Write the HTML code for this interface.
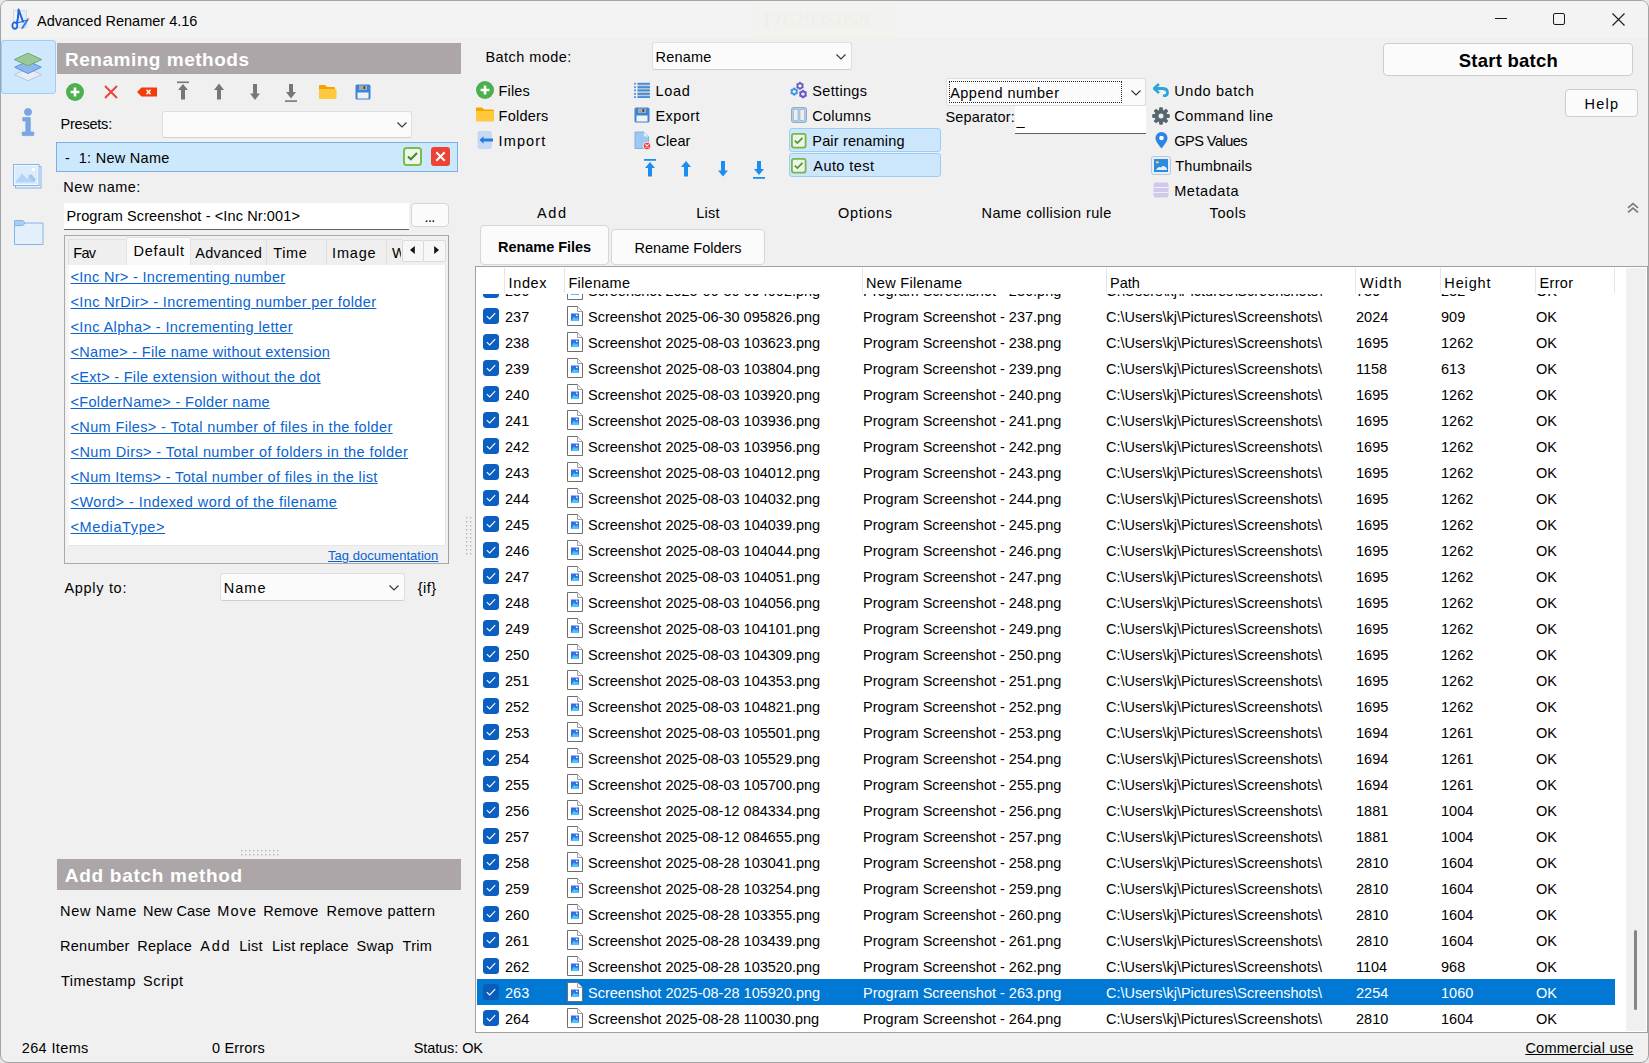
<!DOCTYPE html><html><head><meta charset="utf-8"><style>
html,body{margin:0;padding:0;}
body{width:1649px;height:1063px;overflow:hidden;background:#e6e6e6;position:relative;font-family:"Liberation Sans",sans-serif;}
.a{position:absolute;}
.t{position:absolute;white-space:pre;line-height:1;font-family:"Liberation Sans",sans-serif;}
.u{text-decoration:underline;text-underline-offset:1px;}
svg{display:block;}
</style></head><body>
<div class="a" style="left:0px;top:0px;width:1647px;height:1061px;background:#f0f0f0;border:1px solid #a4a4a4;border-radius:8px;overflow:hidden"></div>
<div class="a" style="left:1px;top:1px;width:1647px;height:37px;background:#f3f3f3;border-radius:7px 7px 0 0"></div>
<svg class="a" style="left:11px;top:8px" width="19" height="22" viewBox="0 0 19 22">
<rect x="2.5" y="2.5" width="13" height="17" fill="#e4ecf5" stroke="#d2d9e2" stroke-width="1"/>
<rect x="3.5" y="3.5" width="4" height="15" fill="#f2f6fb"/>
<ellipse cx="3.8" cy="17.6" rx="2.5" ry="3.3" fill="none" stroke="#1f66dc" stroke-width="1.7"/>
<path d="M5.6 15.5 C7.2 12 7.2 6 7.6 1.5 L12.3 14.5" fill="none" stroke="#1f66dc" stroke-width="2" stroke-linejoin="round"/>
<path d="M4.5 15.8 C8 14 12 13.5 15.5 12.2" fill="none" stroke="#1f66dc" stroke-width="1.2"/>
<path d="M11 20.5 L17 11.2" fill="none" stroke="#2a86e8" stroke-width="2"/>
<circle cx="17.4" cy="10.6" r="0.9" fill="#f07a6a"/>
<circle cx="11" cy="20.6" r="0.7" fill="#d08a20"/>
</svg>
<div class="t " style="left:37px;top:14px;font-size:14.5px;font-weight:normal;color:#000;">Advanced Renamer 4.16</div>
<div class="a" style="left:751px;top:2px;width:147px;height:36px;background:#f2f2ee"></div>
<div class="t" style="left:761px;top:10px;font-family:'Liberation Serif',serif;font-size:21.5px;color:#eeeeea;letter-spacing:0.1px">1762935058</div>
<svg class="a" style="left:1495px;top:18px" width="12" height="1" viewBox="0 0 12 1"><rect x="0" y="0" width="12" height="1" fill="#1a1a1a"/></svg>
<svg class="a" style="left:1553px;top:13px" width="12" height="12" viewBox="0 0 12 12"><rect x="0.5" y="0.5" width="11" height="11" rx="1.5" fill="none" stroke="#1a1a1a" stroke-width="1"/></svg>
<svg class="a" style="left:1612px;top:13px" width="13" height="13" viewBox="0 0 13 13"><path d="M0.5 0.5L12.5 12.5M12.5 0.5L0.5 12.5" stroke="#1a1a1a" stroke-width="1.1"/></svg>
<div class="a" style="left:1px;top:40px;width:55px;height:54px;background:#d0e8fd;border:1.5px solid #99cffb;border-radius:3px;box-sizing:border-box"></div>
<svg class="a" style="left:13px;top:52px" width="30" height="30" viewBox="0 0 30 30">
<path d="M15 16.4 L28.5 22.6 L15 28.8 L1.5 22.6Z" fill="#e6edf5" stroke="#b9bfd6" stroke-width="0.9"/>
<path d="M15 8.9 L28.2 15.2 L15 21.5 L1.8 15.2Z" fill="#8cb8ef" stroke="#5b8fd6" stroke-width="1"/>
<path d="M15 1.2 L28.8 7.5 L15 13.8 L1.2 7.5Z" fill="#9ac89a" stroke="#6eaa6e" stroke-width="1"/>
</svg>
<svg class="a" style="left:21px;top:108px" width="14" height="29" viewBox="0 0 14 29">
<circle cx="7" cy="4" r="3.6" fill="#79a7e6" stroke="#6a98dc" stroke-width="0.6"/>
<path d="M1.8 9.5 H9.3 V24 H12.8 V27.6 H1.2 V24 H4.8 V13 H1.8Z" fill="#79a7e6" stroke="#6a98dc" stroke-width="0.6"/>
</svg>
<svg class="a" style="left:13px;top:164px" width="30" height="26" viewBox="0 0 30 26">
<rect x="2.5" y="2.5" width="25.5" height="21.5" fill="#e8f2fd" stroke="#86b4e8" stroke-width="1"/>
<rect x="0.5" y="0.5" width="25.5" height="21" fill="#f4f9ff" stroke="#86b4e8" stroke-width="1"/>
<rect x="2" y="2" width="22.5" height="18" fill="#ddecfb"/>
<path d="M2 18.5 L9 9.5 L14 15 L16.5 12.5 L22 18.5Z" fill="#b2d5f7"/>
<path d="M15 12 L18 10 L23 15.5 L21 18Z" fill="#a2c8f2"/>
<circle cx="20.5" cy="5.5" r="1.7" fill="#fff"/>
</svg>
<svg class="a" style="left:14px;top:220px" width="30" height="26" viewBox="0 0 30 26">
<path d="M0.5 3 H29 V24.5 H0.5Z" fill="#e3f0fc" stroke="#86b4e8" stroke-width="1"/>
<path d="M0.5 1 Q0.5 0.5 1 0.5 H9 L11 3 L9 5.5 H0.5Z" fill="#a9cdf3" stroke="#86b4e8" stroke-width="1"/>
</svg>
<div class="a" style="left:57px;top:43px;width:404px;height:31px;background:#aca6a8"></div>
<div class="t " style="left:65px;top:50px;font-size:19px;font-weight:bold;color:#ffffff;letter-spacing:0.513px;">Renaming methods</div>
<svg class="a" style="left:66px;top:83px" width="18" height="18" viewBox="0 0 18 18"><circle cx="9" cy="9" r="9" fill="#4caf50"/><path d="M9 4.6v8.8M4.6 9h8.8" stroke="#fff" stroke-width="2.6"/></svg>
<svg class="a" style="left:104px;top:85px" width="14" height="14" viewBox="0 0 14 14"><path d="M1 1L13 13M13 1L1 13" stroke="#e9463c" stroke-width="2"/></svg>
<svg class="a" style="left:137px;top:87px" width="20" height="10" viewBox="0 0 20 10"><path d="M0 5 L4.5 0.5 H20 V9.5 H4.5Z" fill="#f23d0a"/><path d="M9.5 2.7L13.5 7.3M13.5 2.7L9.5 7.3" stroke="#fff" stroke-width="1.4"/></svg>
<svg class="a" style="left:177px;top:81px" width="13" height="19" viewBox="0 0 13 19"><rect x="0" y="0.5" width="12" height="1.6" fill="#777777"/><path d="M6 3 L11 9 H8 V18.5 H4 V9 H1Z" fill="#777777"/></svg>
<svg class="a" style="left:213px;top:83px" width="12" height="17" viewBox="0 0 12 17"><path d="M6 0.5 L11 7 H8 V16.5 H4 V7 H1Z" fill="#777777"/></svg>
<svg class="a" style="left:249px;top:84px" width="12" height="17" viewBox="0 0 12 17"><path d="M6 16 L11 9.5 H8 V0 H4 V9.5 H1Z" fill="#777777"/></svg>
<svg class="a" style="left:285px;top:84px" width="12" height="18" viewBox="0 0 12 18"><path d="M6 14.5 L11 8 H8 V0 H4 V8 H1Z" fill="#777777"/><rect x="0" y="16.3" width="12" height="1.6" fill="#777777"/></svg>
<svg class="a" style="left:318px;top:84px" width="19" height="16" viewBox="0 0 19 16"><path d="M1 2 Q1 1 2 1 H7 L9 3 H16 Q17 3 17 4 V6 H1Z" fill="#f5a300"/><path d="M1 5 H17.5 Q18.5 5 18.5 6 V14 Q18.5 15 17.5 15 H2 Q1 15 1 14Z" fill="#ffc83d"/></svg>
<svg class="a" style="left:355px;top:84px" width="16" height="16" viewBox="0 0 16 16"><rect x="0.5" y="0.5" width="15" height="15" rx="1.5" fill="#3a86d8"/><rect x="4" y="1.5" width="8" height="4.5" fill="#a8a8a8"/><rect x="8.5" y="2" width="1.6" height="3" fill="#444"/><rect x="2.5" y="8.5" width="11" height="6" fill="#f3f3f3"/></svg>
<div class="t " style="left:60.5px;top:117px;font-size:14.5px;font-weight:normal;color:#000;letter-spacing:-0.214px;">Presets:</div>
<div class="a" style="left:162px;top:111px;width:250px;height:27px;background:#fbfbfb;border:1px solid #dedede;border-bottom-color:#cfcfcf;border-radius:3px;box-sizing:border-box"></div>
<svg class="a" style="left:397px;top:122px" width="10" height="6" viewBox="0 0 10 6"><path d="M0.5 0.5 L5 5 L9.5 0.5" fill="none" stroke="#333" stroke-width="1.1"/></svg>
<div class="a" style="left:56px;top:142px;width:402px;height:30px;background:#cce8fc;border:1px solid #7aaeea;box-sizing:border-box"></div>
<div class="t " style="left:65px;top:151px;font-size:14.5px;font-weight:normal;color:#000;letter-spacing:0.277px;">-  1: New Name</div>
<svg class="a" style="left:403px;top:147px" width="19" height="19" viewBox="0 0 19 19"><rect x="1" y="1" width="17" height="17" rx="2.5" fill="#eef6ea" stroke="#7dbd47" stroke-width="2"/><path d="M5 9.5 L7.8 12.3 L14 6" fill="none" stroke="#3f8a2a" stroke-width="2"/></svg>
<svg class="a" style="left:431px;top:147px" width="19" height="19" viewBox="0 0 19 19"><rect x="0" y="0" width="19" height="19" rx="3" fill="#ee4334"/><path d="M5.3 5.3L13.7 13.7M13.7 5.3L5.3 13.7" stroke="#fff" stroke-width="2"/></svg>
<div class="t " style="left:63.3px;top:180px;font-size:14.5px;font-weight:normal;color:#000;letter-spacing:0.450px;">New name:</div>
<div class="a" style="left:64px;top:203px;width:345px;height:27px;background:#ffffff;border-bottom:1px solid #5e5e5e;box-sizing:border-box"></div>
<div class="t " style="left:66.4px;top:209px;font-size:14.5px;font-weight:normal;color:#000;letter-spacing:0.119px;">Program Screenshot - &lt;Inc Nr:001&gt;</div>
<div class="a" style="left:411px;top:203px;width:38px;height:24px;background:#fbfbfb;border:1px solid #d6d6d6;border-radius:4px;box-sizing:border-box"></div>
<div class="t " style="left:424.6px;top:210px;font-size:14.5px;font-weight:normal;color:#000;letter-spacing:-0.700px;">...</div>
<div class="a" style="left:64px;top:235px;width:385px;height:329px;border:1px solid #a9a9a9;border-right-color:#a0a0a0;box-sizing:border-box;background:#f0f0f0"></div>
<div class="a" style="left:68px;top:239px;width:59px;height:26px;background:#efefef;border:1px solid #e0e0e0;border-bottom:none;box-sizing:border-box"></div>
<div class="a" style="left:190px;top:239px;width:77px;height:26px;background:#efefef;border:1px solid #e0e0e0;border-bottom:none;box-sizing:border-box"></div>
<div class="a" style="left:266px;top:239px;width:61px;height:26px;background:#efefef;border:1px solid #e0e0e0;border-bottom:none;box-sizing:border-box"></div>
<div class="a" style="left:326px;top:239px;width:61px;height:26px;background:#efefef;border:1px solid #e0e0e0;border-bottom:none;box-sizing:border-box"></div>
<div class="a" style="left:386px;top:239px;width:16px;height:26px;background:#efefef;border:1px solid #e0e0e0;border-bottom:none;border-right:none;box-sizing:border-box"></div>
<div class="a" style="left:126px;top:237px;width:65px;height:29px;background:#f9f9f9;border:1px solid #e3e3e3;border-bottom:none;box-sizing:border-box"></div>
<div class="t " style="left:73.3px;top:246px;font-size:14.5px;font-weight:normal;color:#000;letter-spacing:-0.700px;">Fav</div>
<div class="t " style="left:133.5px;top:244px;font-size:14.5px;font-weight:normal;color:#000;letter-spacing:0.783px;">Default</div>
<div class="t " style="left:195.3px;top:246px;font-size:14.5px;font-weight:normal;color:#000;letter-spacing:0.286px;">Advanced</div>
<div class="t " style="left:273.3px;top:246px;font-size:14.5px;font-weight:normal;color:#000;letter-spacing:0.633px;">Time</div>
<div class="t " style="left:332.1px;top:246px;font-size:14.5px;font-weight:normal;color:#000;letter-spacing:0.800px;">Image</div>
<div class="a" style="left:386px;top:239px;width:15px;height:26px;overflow:hidden"><div class="t" style="left:6px;top:7px;font-size:14.5px">W</div></div>
<div class="a" style="left:402px;top:240px;width:22px;height:22px;background:#f7f7f7;border:1px solid #dadada;border-radius:2px;box-sizing:border-box"></div>
<div class="a" style="left:423px;top:240px;width:23px;height:22px;background:#f7f7f7;border:1px solid #dadada;border-radius:2px;box-sizing:border-box"></div>
<svg class="a" style="left:410px;top:246px" width="5" height="8" viewBox="0 0 5 8"><path d="M4.8 0 V8 L0 4Z" fill="#111"/></svg>
<svg class="a" style="left:434px;top:246px" width="5" height="8" viewBox="0 0 5 8"><path d="M0.2 0 V8 L5 4Z" fill="#111"/></svg>
<div class="a" style="left:66px;top:265px;width:4px;height:281px;background:#f6f6f6"></div>
<div class="a" style="left:69px;top:265px;width:377px;height:281px;background:#ffffff;border-right:1px solid #e6e6e6;border-bottom:1px solid #e6e6e6;box-sizing:border-box"></div>
<div class="t u" style="left:70.5px;top:270px;font-size:14.5px;font-weight:normal;color:#0a64d0;letter-spacing:0.314px;">&lt;Inc Nr&gt; - Incrementing number</div>
<div class="t u" style="left:70.5px;top:295px;font-size:14.5px;font-weight:normal;color:#0a64d0;letter-spacing:0.377px;">&lt;Inc NrDir&gt; - Incrementing number per folder</div>
<div class="t u" style="left:70.5px;top:320px;font-size:14.5px;font-weight:normal;color:#0a64d0;letter-spacing:0.391px;">&lt;Inc Alpha&gt; - Incrementing letter</div>
<div class="t u" style="left:70.5px;top:345px;font-size:14.5px;font-weight:normal;color:#0a64d0;letter-spacing:0.317px;">&lt;Name&gt; - File name without extension</div>
<div class="t u" style="left:70.5px;top:370px;font-size:14.5px;font-weight:normal;color:#0a64d0;letter-spacing:0.305px;">&lt;Ext&gt; - File extension without the dot</div>
<div class="t u" style="left:70.5px;top:395px;font-size:14.5px;font-weight:normal;color:#0a64d0;letter-spacing:0.324px;">&lt;FolderName&gt; - Folder name</div>
<div class="t u" style="left:70.5px;top:420px;font-size:14.5px;font-weight:normal;color:#0a64d0;letter-spacing:0.362px;">&lt;Num Files&gt; - Total number of files in the folder</div>
<div class="t u" style="left:70.5px;top:445px;font-size:14.5px;font-weight:normal;color:#0a64d0;letter-spacing:0.408px;">&lt;Num Dirs&gt; - Total number of folders in the folder</div>
<div class="t u" style="left:70.5px;top:470px;font-size:14.5px;font-weight:normal;color:#0a64d0;letter-spacing:0.352px;">&lt;Num Items&gt; - Total number of files in the list</div>
<div class="t u" style="left:70.5px;top:495px;font-size:14.5px;font-weight:normal;color:#0a64d0;letter-spacing:0.442px;">&lt;Word&gt; - Indexed word of the filename</div>
<div class="t u" style="left:70.5px;top:520px;font-size:14.5px;font-weight:normal;color:#0a64d0;letter-spacing:0.610px;">&lt;MediaType&gt;</div>
<div class="t u" style="left:328px;top:549px;font-size:13px;font-weight:normal;color:#0a64d0;letter-spacing:0.031px;">Tag documentation</div>
<div class="t " style="left:64.4px;top:581px;font-size:14.5px;font-weight:normal;color:#000;letter-spacing:0.700px;">Apply to:</div>
<div class="a" style="left:220px;top:573px;width:185px;height:28px;background:#fbfbfb;border:1px solid #dedede;border-bottom-color:#cfcfcf;border-radius:3px;box-sizing:border-box"></div>
<div class="t " style="left:223.8px;top:581px;font-size:14.5px;font-weight:normal;color:#000;letter-spacing:1.000px;">Name</div>
<svg class="a" style="left:389px;top:585px" width="10" height="6" viewBox="0 0 10 6"><path d="M0.5 0.5 L5 5 L9.5 0.5" fill="none" stroke="#333" stroke-width="1.1"/></svg>
<div class="t " style="left:417.8px;top:581px;font-size:14.5px;font-weight:normal;color:#000;letter-spacing:0.467px;">{if}</div>
<svg class="a" style="left:465px;top:516px" width="8" height="39" viewBox="0 0 8 39"><rect x="1" y="1" width="1.4" height="1.4" fill="#b8b8b8"/><rect x="1" y="5" width="1.4" height="1.4" fill="#b8b8b8"/><rect x="1" y="9" width="1.4" height="1.4" fill="#b8b8b8"/><rect x="1" y="13" width="1.4" height="1.4" fill="#b8b8b8"/><rect x="1" y="17" width="1.4" height="1.4" fill="#b8b8b8"/><rect x="1" y="21" width="1.4" height="1.4" fill="#b8b8b8"/><rect x="1" y="25" width="1.4" height="1.4" fill="#b8b8b8"/><rect x="1" y="29" width="1.4" height="1.4" fill="#b8b8b8"/><rect x="1" y="33" width="1.4" height="1.4" fill="#b8b8b8"/><rect x="1" y="37" width="1.4" height="1.4" fill="#b8b8b8"/><rect x="5" y="1" width="1.4" height="1.4" fill="#b8b8b8"/><rect x="5" y="5" width="1.4" height="1.4" fill="#b8b8b8"/><rect x="5" y="9" width="1.4" height="1.4" fill="#b8b8b8"/><rect x="5" y="13" width="1.4" height="1.4" fill="#b8b8b8"/><rect x="5" y="17" width="1.4" height="1.4" fill="#b8b8b8"/><rect x="5" y="21" width="1.4" height="1.4" fill="#b8b8b8"/><rect x="5" y="25" width="1.4" height="1.4" fill="#b8b8b8"/><rect x="5" y="29" width="1.4" height="1.4" fill="#b8b8b8"/><rect x="5" y="33" width="1.4" height="1.4" fill="#b8b8b8"/><rect x="5" y="37" width="1.4" height="1.4" fill="#b8b8b8"/></svg>
<svg class="a" style="left:240px;top:849px" width="39" height="8" viewBox="0 0 39 8"><rect x="1" y="1" width="1.4" height="1.4" fill="#b8b8b8"/><rect x="1" y="5" width="1.4" height="1.4" fill="#b8b8b8"/><rect x="5" y="1" width="1.4" height="1.4" fill="#b8b8b8"/><rect x="5" y="5" width="1.4" height="1.4" fill="#b8b8b8"/><rect x="9" y="1" width="1.4" height="1.4" fill="#b8b8b8"/><rect x="9" y="5" width="1.4" height="1.4" fill="#b8b8b8"/><rect x="13" y="1" width="1.4" height="1.4" fill="#b8b8b8"/><rect x="13" y="5" width="1.4" height="1.4" fill="#b8b8b8"/><rect x="17" y="1" width="1.4" height="1.4" fill="#b8b8b8"/><rect x="17" y="5" width="1.4" height="1.4" fill="#b8b8b8"/><rect x="21" y="1" width="1.4" height="1.4" fill="#b8b8b8"/><rect x="21" y="5" width="1.4" height="1.4" fill="#b8b8b8"/><rect x="25" y="1" width="1.4" height="1.4" fill="#b8b8b8"/><rect x="25" y="5" width="1.4" height="1.4" fill="#b8b8b8"/><rect x="29" y="1" width="1.4" height="1.4" fill="#b8b8b8"/><rect x="29" y="5" width="1.4" height="1.4" fill="#b8b8b8"/><rect x="33" y="1" width="1.4" height="1.4" fill="#b8b8b8"/><rect x="33" y="5" width="1.4" height="1.4" fill="#b8b8b8"/><rect x="37" y="1" width="1.4" height="1.4" fill="#b8b8b8"/><rect x="37" y="5" width="1.4" height="1.4" fill="#b8b8b8"/></svg>
<div class="a" style="left:57px;top:859px;width:404px;height:31px;background:#aca6a8"></div>
<div class="t " style="left:64.8px;top:866px;font-size:19px;font-weight:bold;color:#ffffff;letter-spacing:0.707px;">Add batch method</div>
<div class="t " style="left:60.1px;top:904px;font-size:14.5px;font-weight:normal;color:#000;letter-spacing:0.629px;">New Name</div>
<div class="t " style="left:143.1px;top:904px;font-size:14.5px;font-weight:normal;color:#000;letter-spacing:0.086px;">New Case</div>
<div class="t " style="left:217.3px;top:904px;font-size:14.5px;font-weight:normal;color:#000;letter-spacing:1.133px;">Move</div>
<div class="t " style="left:263.3px;top:904px;font-size:14.5px;font-weight:normal;color:#000;letter-spacing:0.200px;">Remove</div>
<div class="t " style="left:326.5px;top:904px;font-size:14.5px;font-weight:normal;color:#000;letter-spacing:0.415px;">Remove pattern</div>
<div class="t " style="left:60.1px;top:939px;font-size:14.5px;font-weight:normal;color:#000;letter-spacing:0.229px;">Renumber</div>
<div class="t " style="left:137.3px;top:939px;font-size:14.5px;font-weight:normal;color:#000;letter-spacing:0.233px;">Replace</div>
<div class="t " style="left:200.3px;top:939px;font-size:14.5px;font-weight:normal;color:#000;letter-spacing:1.700px;">Add</div>
<div class="t " style="left:239.2px;top:939px;font-size:14.5px;font-weight:normal;color:#000;letter-spacing:0.267px;">List</div>
<div class="t " style="left:272.1px;top:939px;font-size:14.5px;font-weight:normal;color:#000;letter-spacing:0.200px;">List replace</div>
<div class="t " style="left:356.5px;top:939px;font-size:14.5px;font-weight:normal;color:#000;letter-spacing:0.300px;">Swap</div>
<div class="t " style="left:402.6px;top:939px;font-size:14.5px;font-weight:normal;color:#000;letter-spacing:0.233px;">Trim</div>
<div class="t " style="left:61.1px;top:974px;font-size:14.5px;font-weight:normal;color:#000;letter-spacing:0.425px;">Timestamp</div>
<div class="t " style="left:143.1px;top:974px;font-size:14.5px;font-weight:normal;color:#000;letter-spacing:0.580px;">Script</div>
<div class="t " style="left:21.7px;top:1041px;font-size:14.5px;font-weight:normal;color:#000;letter-spacing:0.375px;">264 Items</div>
<div class="t " style="left:211.9px;top:1041px;font-size:14.5px;font-weight:normal;color:#000;letter-spacing:0.200px;">0 Errors</div>
<div class="t " style="left:413.7px;top:1041px;font-size:14.5px;font-weight:normal;color:#000;letter-spacing:-0.089px;">Status: OK</div>
<div class="t u" style="left:1525.4px;top:1041px;font-size:14.5px;font-weight:normal;color:#000;letter-spacing:0.238px;">Commercial use</div>
<div class="t " style="left:485.5px;top:50px;font-size:14.5px;font-weight:normal;color:#000;letter-spacing:0.440px;">Batch mode:</div>
<div class="a" style="left:652px;top:42px;width:200px;height:28px;background:#fbfbfb;border:1px solid #dedede;border-bottom-color:#cfcfcf;border-radius:3px;box-sizing:border-box"></div>
<div class="t " style="left:655.5px;top:50px;font-size:14.5px;font-weight:normal;color:#000;letter-spacing:0.220px;">Rename</div>
<svg class="a" style="left:836px;top:54px" width="10" height="6" viewBox="0 0 10 6"><path d="M0.5 0.5 L5 5 L9.5 0.5" fill="none" stroke="#333" stroke-width="1.1"/></svg>
<svg class="a" style="left:476px;top:81px" width="18" height="18" viewBox="0 0 18 18"><circle cx="9" cy="9" r="9" fill="#4caf50"/><path d="M9 4.6v8.8M4.6 9h8.8" stroke="#fff" stroke-width="2.6"/></svg>
<div class="t " style="left:498.6px;top:84px;font-size:14.5px;font-weight:normal;color:#000;letter-spacing:0.125px;">Files</div>
<svg class="a" style="left:476px;top:107px" width="18" height="15" viewBox="0 0 18 15"><path d="M0 1.5 Q0 0.5 1 0.5 H6 L8 2.5 H17 Q18 2.5 18 3.5 V5 H0Z" fill="#f5a300"/><path d="M0 4 H17 Q18 4 18 5 V13.5 Q18 14.5 17 14.5 H1 Q0 14.5 0 13.5Z" fill="#ffc83d"/></svg>
<div class="t " style="left:498.6px;top:109px;font-size:14.5px;font-weight:normal;color:#000;letter-spacing:0.233px;">Folders</div>
<svg class="a" style="left:477px;top:131px" width="17" height="18" viewBox="0 0 17 18"><rect x="1" y="0.5" width="13.5" height="17" rx="1.5" fill="#c4dbf6" stroke="#a9c4e6" stroke-width="0.8" stroke-dasharray="1 1"/><path d="M2.5 9 L6.5 5.2 V7.6 H16 V10.4 H6.5 V12.8Z" fill="#2a78e0"/></svg>
<div class="t " style="left:498.6px;top:134px;font-size:14.5px;font-weight:normal;color:#000;letter-spacing:1.100px;">Import</div>
<svg class="a" style="left:634px;top:82px" width="16" height="16" viewBox="0 0 16 16"><rect x="3.5" y="1" width="12" height="14" fill="#c4c8cc"/><rect x="0" y="0.8" width="2" height="1.8" fill="#5a9ae0"/><rect x="3.5" y="0.8" width="12.5" height="1.8" fill="#3a8ee0"/><rect x="0" y="4.3" width="2" height="1.8" fill="#5a9ae0"/><rect x="3.5" y="4.3" width="12.5" height="1.8" fill="#3a8ee0"/><rect x="0" y="7.5" width="2" height="1.8" fill="#5a9ae0"/><rect x="3.5" y="7.5" width="12.5" height="1.8" fill="#3a8ee0"/><rect x="0" y="11" width="2" height="1.8" fill="#5a9ae0"/><rect x="3.5" y="11" width="12.5" height="1.8" fill="#3a8ee0"/><rect x="0" y="14.2" width="2" height="1.8" fill="#5a9ae0"/><rect x="3.5" y="14.2" width="12.5" height="1.8" fill="#3a8ee0"/></svg>
<div class="t " style="left:655.5px;top:84px;font-size:14.5px;font-weight:normal;color:#000;letter-spacing:0.667px;">Load</div>
<svg class="a" style="left:634px;top:107px" width="16" height="16" viewBox="0 0 16 16"><rect x="0.5" y="0.5" width="15" height="15" rx="1.5" fill="#3a86d8"/><rect x="4" y="1.5" width="8" height="4.5" fill="#a8a8a8"/><rect x="8.5" y="2" width="1.6" height="3" fill="#444"/><rect x="2.5" y="8.5" width="11" height="6" fill="#f3f3f3"/></svg>
<div class="t " style="left:655.5px;top:109px;font-size:14.5px;font-weight:normal;color:#000;letter-spacing:0.440px;">Export</div>
<svg class="a" style="left:634px;top:131px" width="18" height="19" viewBox="0 0 18 19"><path d="M1 1 H10 L14.5 5.5 V17.5 H1Z" fill="#9cc8f2" stroke="#7fb2e6" stroke-width="1"/><path d="M10 1 V5.5 H14.5" fill="#e3f0fc"/><circle cx="13" cy="15" r="3.8" fill="#ea3b3b" stroke="#fff" stroke-width="0.8"/><path d="M11.4 13.4L14.6 16.6M14.6 13.4L11.4 16.6" stroke="#fff" stroke-width="1.1"/></svg>
<div class="t " style="left:655.5px;top:134px;font-size:14.5px;font-weight:normal;color:#000;letter-spacing:0.075px;">Clear</div>
<svg class="a" style="left:644px;top:159px" width="12" height="18" viewBox="0 0 12 18"><rect x="0" y="0" width="12" height="1.8" fill="#1a8ff0"/><path d="M6 3 L11 9 H8 V17.5 H4 V9 H1Z" fill="#1a8ff0"/></svg>
<svg class="a" style="left:680px;top:161px" width="12" height="16" viewBox="0 0 12 16"><path d="M6 0 L11 6 H8 V15.5 H4 V6 H1Z" fill="#1a8ff0"/></svg>
<svg class="a" style="left:717px;top:161px" width="12" height="16" viewBox="0 0 12 16"><path d="M6 15.5 L11 9.5 H8 V0 H4 V9.5 H1Z" fill="#1a8ff0"/></svg>
<svg class="a" style="left:753px;top:161px" width="12" height="18" viewBox="0 0 12 18"><path d="M6 14 L11 8 H8 V0 H4 V8 H1Z" fill="#1a8ff0"/><rect x="0" y="16" width="12" height="1.8" fill="#1a8ff0"/></svg>
<svg class="a" style="left:789px;top:81px" width="20" height="19" viewBox="0 0 20 19"><polygon points="11.00,0.50 12.68,1.90 14.72,2.65 14.35,4.80 14.72,6.95 12.68,7.70 11.00,9.10 9.32,7.70 7.28,6.95 7.65,4.80 7.28,2.65 9.32,1.90" fill="#6a58c6"/><circle cx="11" cy="4.8" r="1.63" fill="#f4f4f4"/><polygon points="5.20,6.30 6.88,7.70 8.92,8.45 8.55,10.60 8.92,12.75 6.88,13.50 5.20,14.90 3.52,13.50 1.48,12.75 1.85,10.60 1.48,8.45 3.52,7.70" fill="#3a96e6"/><circle cx="5.2" cy="10.6" r="1.63" fill="#f4f4f4"/><polygon points="14.00,8.60 15.75,10.06 17.90,10.85 17.51,13.10 17.90,15.35 15.76,16.14 14.00,17.60 12.25,16.14 10.10,15.35 10.49,13.10 10.10,10.85 12.24,10.06" fill="#6a58c6"/><circle cx="14" cy="13.1" r="1.71" fill="#f4f4f4"/></svg>
<div class="t " style="left:812.3px;top:84px;font-size:14.5px;font-weight:normal;color:#000;letter-spacing:0.329px;">Settings</div>
<svg class="a" style="left:791px;top:107px" width="16" height="16" viewBox="0 0 16 16"><rect x="0.5" y="0.5" width="15" height="15" rx="2" fill="#a9d0f7" stroke="#95a9bf" stroke-width="1"/><rect x="2.5" y="2.5" width="4.5" height="11" fill="#eceef0" stroke="#a0a8b0" stroke-width="0.6"/><rect x="9" y="2.5" width="4.5" height="11" fill="#eceef0" stroke="#a0a8b0" stroke-width="0.6"/></svg>
<div class="t " style="left:812.3px;top:109px;font-size:14.5px;font-weight:normal;color:#000;letter-spacing:0.233px;">Columns</div>
<div class="a" style="left:789px;top:128px;width:152px;height:24px;background:#cce6fb;border:1px solid #9bcdf6;border-radius:3px;box-sizing:border-box"></div>
<div class="a" style="left:789px;top:153px;width:152px;height:24px;background:#cce6fb;border:1px solid #9bcdf6;border-radius:3px;box-sizing:border-box"></div>
<svg class="a" style="left:791px;top:132.5px" width="16" height="16" viewBox="0 0 16 16"><rect x="0.9" y="0.9" width="13.7" height="13.7" rx="2" fill="#eef4e6" stroke="#76b64c" stroke-width="1.8"/><path d="M3.8 7.6 L6.4 10 L11.5 4.8" fill="none" stroke="#4a9a38" stroke-width="1.7"/></svg>
<svg class="a" style="left:791px;top:157.5px" width="16" height="16" viewBox="0 0 16 16"><rect x="0.9" y="0.9" width="13.7" height="13.7" rx="2" fill="#eef4e6" stroke="#76b64c" stroke-width="1.8"/><path d="M3.8 7.6 L6.4 10 L11.5 4.8" fill="none" stroke="#4a9a38" stroke-width="1.7"/></svg>
<div class="t " style="left:812.3px;top:134px;font-size:14.5px;font-weight:normal;color:#000;letter-spacing:0.158px;">Pair renaming</div>
<div class="t " style="left:813.3px;top:159px;font-size:14.5px;font-weight:normal;color:#000;letter-spacing:0.425px;">Auto test</div>
<div class="a" style="left:946px;top:78px;width:200px;height:28px;background:#fbfbfb;border:1px solid #dcdcdc;border-radius:2px;box-sizing:border-box"></div>
<div class="a" style="left:949px;top:81px;width:173px;height:22px;border:1px dotted #222;box-sizing:border-box"></div>
<div class="t " style="left:950.2px;top:86px;font-size:14.5px;font-weight:normal;color:#000;letter-spacing:0.467px;">Append number</div>
<svg class="a" style="left:1131px;top:90px" width="10" height="6" viewBox="0 0 10 6"><path d="M0.5 0.5 L5 5 L9.5 0.5" fill="none" stroke="#333" stroke-width="1.1"/></svg>
<div class="t " style="left:945.4px;top:110px;font-size:14.5px;font-weight:normal;color:#000;letter-spacing:0.200px;">Separator:</div>
<div class="a" style="left:1015px;top:106px;width:131px;height:28px;background:#ffffff;border-bottom:1px solid #5e5e5e;box-sizing:border-box"></div>
<div class="t " style="left:1016.5px;top:113px;font-size:14.5px;font-weight:normal;color:#000;">_</div>
<svg class="a" style="left:1153px;top:83px" width="16" height="14" viewBox="0 0 16 14"><path d="M6 1 L1 5.5 L6 10" fill="none" stroke="#2aa6d8" stroke-width="2.6" stroke-linejoin="round"/><path d="M2 5.5 H9 Q14.5 5.5 14.5 9.5 Q14.5 13 10 13" fill="none" stroke="#2aa6d8" stroke-width="2.8"/></svg>
<div class="t " style="left:1174.2px;top:84px;font-size:14.5px;font-weight:normal;color:#000;letter-spacing:0.600px;">Undo batch</div>
<svg class="a" style="left:1152px;top:107px" width="18" height="18" viewBox="0 0 18 18"><g transform="translate(9,9)"><rect x="-1.9" y="-8.8" width="3.8" height="5" rx="1" fill="#56676f" transform="rotate(0)"/><rect x="-1.9" y="-8.8" width="3.8" height="5" rx="1" fill="#56676f" transform="rotate(45)"/><rect x="-1.9" y="-8.8" width="3.8" height="5" rx="1" fill="#56676f" transform="rotate(90)"/><rect x="-1.9" y="-8.8" width="3.8" height="5" rx="1" fill="#56676f" transform="rotate(135)"/><rect x="-1.9" y="-8.8" width="3.8" height="5" rx="1" fill="#56676f" transform="rotate(180)"/><rect x="-1.9" y="-8.8" width="3.8" height="5" rx="1" fill="#56676f" transform="rotate(225)"/><rect x="-1.9" y="-8.8" width="3.8" height="5" rx="1" fill="#56676f" transform="rotate(270)"/><rect x="-1.9" y="-8.8" width="3.8" height="5" rx="1" fill="#56676f" transform="rotate(315)"/><circle r="6.3" fill="#56676f"/><circle r="2.5" fill="#eef0f0"/></g></svg>
<div class="t " style="left:1174.2px;top:109px;font-size:14.5px;font-weight:normal;color:#000;letter-spacing:0.491px;">Command line</div>
<svg class="a" style="left:1155px;top:132px" width="13" height="17" viewBox="0 0 13 17"><path d="M6.5 16.5 C3 12 0.5 9 0.5 6 A6 6 0 0 1 12.5 6 C12.5 9 10 12 6.5 16.5Z" fill="#2b83e6"/><circle cx="6.5" cy="6" r="2.3" fill="#fff"/></svg>
<div class="t " style="left:1174.2px;top:134px;font-size:14.5px;font-weight:normal;color:#000;letter-spacing:-0.500px;">GPS Values</div>
<svg class="a" style="left:1151px;top:156px" width="20" height="19" viewBox="0 0 20 19"><rect x="0.5" y="0.5" width="19" height="18" rx="2" fill="#e6eef8" stroke="#b8c8dc" stroke-width="1"/><rect x="3" y="3" width="14" height="13" fill="#2d8ae0"/><circle cx="6.3" cy="6.3" r="1.3" fill="#ffd84a"/><path d="M5 14 Q7 10 10 11.5 Q12 9 14.5 11 Q16 11.5 16 14Z" fill="#dff0ff"/></svg>
<div class="t " style="left:1175.2px;top:159px;font-size:14.5px;font-weight:normal;color:#000;letter-spacing:0.200px;">Thumbnails</div>
<svg class="a" style="left:1153px;top:182px" width="16" height="16" viewBox="0 0 16 16"><rect x="0.5" y="0.5" width="15" height="15" rx="2" fill="#d2c8ec"/><rect x="0.5" y="5" width="15" height="1" fill="#f0f0f0"/><rect x="0.5" y="10" width="15" height="1" fill="#f0f0f0"/></svg>
<div class="t " style="left:1174.2px;top:184px;font-size:14.5px;font-weight:normal;color:#000;letter-spacing:0.571px;">Metadata</div>
<div class="t " style="left:537.1px;top:206px;font-size:14.5px;font-weight:normal;color:#000;letter-spacing:1.600px;">Add</div>
<div class="t " style="left:696.2px;top:206px;font-size:14.5px;font-weight:normal;color:#000;letter-spacing:0.267px;">List</div>
<div class="t " style="left:838.1px;top:206px;font-size:14.5px;font-weight:normal;color:#000;letter-spacing:0.650px;">Options</div>
<div class="t " style="left:981.5px;top:206px;font-size:14.5px;font-weight:normal;color:#000;letter-spacing:0.406px;">Name collision rule</div>
<div class="t " style="left:1209.6px;top:206px;font-size:14.5px;font-weight:normal;color:#000;letter-spacing:0.600px;">Tools</div>
<div class="a" style="left:1383px;top:43px;width:250px;height:33px;background:#fbfbfb;border:1px solid #cdcdcd;border-radius:4px;box-sizing:border-box"></div>
<div class="t " style="left:1458.8px;top:52px;font-size:18.5px;font-weight:bold;color:#000;letter-spacing:0.230px;">Start batch</div>
<div class="a" style="left:1565px;top:89px;width:73px;height:28px;background:#fbfbfb;border:1px solid #cdcdcd;border-radius:4px;box-sizing:border-box"></div>
<div class="t " style="left:1584.4px;top:97px;font-size:14.5px;font-weight:normal;color:#000;letter-spacing:1.300px;">Help</div>
<svg class="a" style="left:1627px;top:202px" width="12" height="11" viewBox="0 0 12 11"><path d="M1 5.8 L6 1.5 L11 5.8 M1 10.3 L6 6 L11 10.3" fill="none" stroke="#7a7a7a" stroke-width="1.7"/></svg>
<div class="a" style="left:480px;top:225px;width:129px;height:40px;background:#fbfbfb;border:1px solid #d6d6d6;border-radius:4px;box-sizing:border-box"></div>
<div class="t " style="left:498px;top:240px;font-size:14.5px;font-weight:bold;color:#000;letter-spacing:-0.036px;">Rename Files</div>
<div class="a" style="left:611px;top:229px;width:154px;height:36px;background:#fbfbfb;border:1px solid #d6d6d6;border-radius:4px;box-sizing:border-box"></div>
<div class="t " style="left:634.6px;top:241px;font-size:14.5px;font-weight:normal;color:#000;letter-spacing:-0.015px;">Rename Folders</div>
<div class="a" style="left:475px;top:266px;width:173px;height:766px;"></div>
<div class="a" style="left:475px;top:266px;width:1173px;height:767px;background:#ffffff;border:1px solid #a0a0a0;box-sizing:border-box"></div>
<div class="a" style="left:1626px;top:268px;width:20px;height:763px;background:#f0f0f0"></div>
<div class="a" style="left:1634px;top:930px;width:3px;height:80px;background:#858585;border-radius:1.5px"></div>
<div class="a" style="left:476px;top:294px;width:1150px;height:737px;overflow:hidden">
<svg class="a" style="left:7px;top:-12px" width="16" height="16" viewBox="0 0 16 16"><rect x="0" y="0" width="16" height="16" rx="3.5" fill="#0b5fc0"/><path d="M3.8 8.2 L6.7 11 L12.2 5.2" fill="none" stroke="#fff" stroke-width="1.1"/></svg>
<div class="t " style="left:29px;top:-10px;font-size:14.5px;font-weight:normal;color:#000000;">236</div>
<svg class="a" style="left:91px;top:-14px" width="17" height="20" viewBox="0 0 17 20"><path d="M0.5 0.5 H10.5 L15.5 5.5 V19.5 H0.5Z" fill="#fff" stroke="#6e6e6e" stroke-width="1"/><path d="M10.5 0.5 V5.5 H15.5" fill="#f4f4f4" stroke="#8a8a8a" stroke-width="0.8"/><rect x="4" y="7.5" width="8" height="7.5" fill="#2f6fe0"/><path d="M4 15 L7 10.5 L9 12.5 L10.5 11 L12 15Z" fill="#4cc6f6"/><circle cx="9.8" cy="9.3" r="0.9" fill="#fff"/></svg>
<div class="t " style="left:112px;top:-10px;font-size:14.5px;font-weight:normal;color:#000000;">Screenshot 2025-06-30 094002.png</div>
<div class="t " style="left:387px;top:-10px;font-size:14.5px;font-weight:normal;color:#000000;">Program Screenshot - 236.png</div>
<div class="t " style="left:630px;top:-10px;font-size:14.5px;font-weight:normal;color:#000000;">C:\Users\kj\Pictures\Screenshots\</div>
<div class="t " style="left:880px;top:-10px;font-size:14.5px;font-weight:normal;color:#000000;">739</div>
<div class="t " style="left:965px;top:-10px;font-size:14.5px;font-weight:normal;color:#000000;">232</div>
<div class="t " style="left:1060px;top:-10px;font-size:14.5px;font-weight:normal;color:#000000;">OK</div>
<svg class="a" style="left:7px;top:14px" width="16" height="16" viewBox="0 0 16 16"><rect x="0" y="0" width="16" height="16" rx="3.5" fill="#0b5fc0"/><path d="M3.8 8.2 L6.7 11 L12.2 5.2" fill="none" stroke="#fff" stroke-width="1.1"/></svg>
<div class="t " style="left:29px;top:16px;font-size:14.5px;font-weight:normal;color:#000000;">237</div>
<svg class="a" style="left:91px;top:12px" width="17" height="20" viewBox="0 0 17 20"><path d="M0.5 0.5 H10.5 L15.5 5.5 V19.5 H0.5Z" fill="#fff" stroke="#6e6e6e" stroke-width="1"/><path d="M10.5 0.5 V5.5 H15.5" fill="#f4f4f4" stroke="#8a8a8a" stroke-width="0.8"/><rect x="4" y="7.5" width="8" height="7.5" fill="#2f6fe0"/><path d="M4 15 L7 10.5 L9 12.5 L10.5 11 L12 15Z" fill="#4cc6f6"/><circle cx="9.8" cy="9.3" r="0.9" fill="#fff"/></svg>
<div class="t " style="left:112px;top:16px;font-size:14.5px;font-weight:normal;color:#000000;">Screenshot 2025-06-30 095826.png</div>
<div class="t " style="left:387px;top:16px;font-size:14.5px;font-weight:normal;color:#000000;">Program Screenshot - 237.png</div>
<div class="t " style="left:630px;top:16px;font-size:14.5px;font-weight:normal;color:#000000;">C:\Users\kj\Pictures\Screenshots\</div>
<div class="t " style="left:880px;top:16px;font-size:14.5px;font-weight:normal;color:#000000;">2024</div>
<div class="t " style="left:965px;top:16px;font-size:14.5px;font-weight:normal;color:#000000;">909</div>
<div class="t " style="left:1060px;top:16px;font-size:14.5px;font-weight:normal;color:#000000;">OK</div>
<svg class="a" style="left:7px;top:40px" width="16" height="16" viewBox="0 0 16 16"><rect x="0" y="0" width="16" height="16" rx="3.5" fill="#0b5fc0"/><path d="M3.8 8.2 L6.7 11 L12.2 5.2" fill="none" stroke="#fff" stroke-width="1.1"/></svg>
<div class="t " style="left:29px;top:42px;font-size:14.5px;font-weight:normal;color:#000000;">238</div>
<svg class="a" style="left:91px;top:38px" width="17" height="20" viewBox="0 0 17 20"><path d="M0.5 0.5 H10.5 L15.5 5.5 V19.5 H0.5Z" fill="#fff" stroke="#6e6e6e" stroke-width="1"/><path d="M10.5 0.5 V5.5 H15.5" fill="#f4f4f4" stroke="#8a8a8a" stroke-width="0.8"/><rect x="4" y="7.5" width="8" height="7.5" fill="#2f6fe0"/><path d="M4 15 L7 10.5 L9 12.5 L10.5 11 L12 15Z" fill="#4cc6f6"/><circle cx="9.8" cy="9.3" r="0.9" fill="#fff"/></svg>
<div class="t " style="left:112px;top:42px;font-size:14.5px;font-weight:normal;color:#000000;">Screenshot 2025-08-03 103623.png</div>
<div class="t " style="left:387px;top:42px;font-size:14.5px;font-weight:normal;color:#000000;">Program Screenshot - 238.png</div>
<div class="t " style="left:630px;top:42px;font-size:14.5px;font-weight:normal;color:#000000;">C:\Users\kj\Pictures\Screenshots\</div>
<div class="t " style="left:880px;top:42px;font-size:14.5px;font-weight:normal;color:#000000;">1695</div>
<div class="t " style="left:965px;top:42px;font-size:14.5px;font-weight:normal;color:#000000;">1262</div>
<div class="t " style="left:1060px;top:42px;font-size:14.5px;font-weight:normal;color:#000000;">OK</div>
<svg class="a" style="left:7px;top:66px" width="16" height="16" viewBox="0 0 16 16"><rect x="0" y="0" width="16" height="16" rx="3.5" fill="#0b5fc0"/><path d="M3.8 8.2 L6.7 11 L12.2 5.2" fill="none" stroke="#fff" stroke-width="1.1"/></svg>
<div class="t " style="left:29px;top:68px;font-size:14.5px;font-weight:normal;color:#000000;">239</div>
<svg class="a" style="left:91px;top:64px" width="17" height="20" viewBox="0 0 17 20"><path d="M0.5 0.5 H10.5 L15.5 5.5 V19.5 H0.5Z" fill="#fff" stroke="#6e6e6e" stroke-width="1"/><path d="M10.5 0.5 V5.5 H15.5" fill="#f4f4f4" stroke="#8a8a8a" stroke-width="0.8"/><rect x="4" y="7.5" width="8" height="7.5" fill="#2f6fe0"/><path d="M4 15 L7 10.5 L9 12.5 L10.5 11 L12 15Z" fill="#4cc6f6"/><circle cx="9.8" cy="9.3" r="0.9" fill="#fff"/></svg>
<div class="t " style="left:112px;top:68px;font-size:14.5px;font-weight:normal;color:#000000;">Screenshot 2025-08-03 103804.png</div>
<div class="t " style="left:387px;top:68px;font-size:14.5px;font-weight:normal;color:#000000;">Program Screenshot - 239.png</div>
<div class="t " style="left:630px;top:68px;font-size:14.5px;font-weight:normal;color:#000000;">C:\Users\kj\Pictures\Screenshots\</div>
<div class="t " style="left:880px;top:68px;font-size:14.5px;font-weight:normal;color:#000000;">1158</div>
<div class="t " style="left:965px;top:68px;font-size:14.5px;font-weight:normal;color:#000000;">613</div>
<div class="t " style="left:1060px;top:68px;font-size:14.5px;font-weight:normal;color:#000000;">OK</div>
<svg class="a" style="left:7px;top:92px" width="16" height="16" viewBox="0 0 16 16"><rect x="0" y="0" width="16" height="16" rx="3.5" fill="#0b5fc0"/><path d="M3.8 8.2 L6.7 11 L12.2 5.2" fill="none" stroke="#fff" stroke-width="1.1"/></svg>
<div class="t " style="left:29px;top:94px;font-size:14.5px;font-weight:normal;color:#000000;">240</div>
<svg class="a" style="left:91px;top:90px" width="17" height="20" viewBox="0 0 17 20"><path d="M0.5 0.5 H10.5 L15.5 5.5 V19.5 H0.5Z" fill="#fff" stroke="#6e6e6e" stroke-width="1"/><path d="M10.5 0.5 V5.5 H15.5" fill="#f4f4f4" stroke="#8a8a8a" stroke-width="0.8"/><rect x="4" y="7.5" width="8" height="7.5" fill="#2f6fe0"/><path d="M4 15 L7 10.5 L9 12.5 L10.5 11 L12 15Z" fill="#4cc6f6"/><circle cx="9.8" cy="9.3" r="0.9" fill="#fff"/></svg>
<div class="t " style="left:112px;top:94px;font-size:14.5px;font-weight:normal;color:#000000;">Screenshot 2025-08-03 103920.png</div>
<div class="t " style="left:387px;top:94px;font-size:14.5px;font-weight:normal;color:#000000;">Program Screenshot - 240.png</div>
<div class="t " style="left:630px;top:94px;font-size:14.5px;font-weight:normal;color:#000000;">C:\Users\kj\Pictures\Screenshots\</div>
<div class="t " style="left:880px;top:94px;font-size:14.5px;font-weight:normal;color:#000000;">1695</div>
<div class="t " style="left:965px;top:94px;font-size:14.5px;font-weight:normal;color:#000000;">1262</div>
<div class="t " style="left:1060px;top:94px;font-size:14.5px;font-weight:normal;color:#000000;">OK</div>
<svg class="a" style="left:7px;top:118px" width="16" height="16" viewBox="0 0 16 16"><rect x="0" y="0" width="16" height="16" rx="3.5" fill="#0b5fc0"/><path d="M3.8 8.2 L6.7 11 L12.2 5.2" fill="none" stroke="#fff" stroke-width="1.1"/></svg>
<div class="t " style="left:29px;top:120px;font-size:14.5px;font-weight:normal;color:#000000;">241</div>
<svg class="a" style="left:91px;top:116px" width="17" height="20" viewBox="0 0 17 20"><path d="M0.5 0.5 H10.5 L15.5 5.5 V19.5 H0.5Z" fill="#fff" stroke="#6e6e6e" stroke-width="1"/><path d="M10.5 0.5 V5.5 H15.5" fill="#f4f4f4" stroke="#8a8a8a" stroke-width="0.8"/><rect x="4" y="7.5" width="8" height="7.5" fill="#2f6fe0"/><path d="M4 15 L7 10.5 L9 12.5 L10.5 11 L12 15Z" fill="#4cc6f6"/><circle cx="9.8" cy="9.3" r="0.9" fill="#fff"/></svg>
<div class="t " style="left:112px;top:120px;font-size:14.5px;font-weight:normal;color:#000000;">Screenshot 2025-08-03 103936.png</div>
<div class="t " style="left:387px;top:120px;font-size:14.5px;font-weight:normal;color:#000000;">Program Screenshot - 241.png</div>
<div class="t " style="left:630px;top:120px;font-size:14.5px;font-weight:normal;color:#000000;">C:\Users\kj\Pictures\Screenshots\</div>
<div class="t " style="left:880px;top:120px;font-size:14.5px;font-weight:normal;color:#000000;">1695</div>
<div class="t " style="left:965px;top:120px;font-size:14.5px;font-weight:normal;color:#000000;">1262</div>
<div class="t " style="left:1060px;top:120px;font-size:14.5px;font-weight:normal;color:#000000;">OK</div>
<svg class="a" style="left:7px;top:144px" width="16" height="16" viewBox="0 0 16 16"><rect x="0" y="0" width="16" height="16" rx="3.5" fill="#0b5fc0"/><path d="M3.8 8.2 L6.7 11 L12.2 5.2" fill="none" stroke="#fff" stroke-width="1.1"/></svg>
<div class="t " style="left:29px;top:146px;font-size:14.5px;font-weight:normal;color:#000000;">242</div>
<svg class="a" style="left:91px;top:142px" width="17" height="20" viewBox="0 0 17 20"><path d="M0.5 0.5 H10.5 L15.5 5.5 V19.5 H0.5Z" fill="#fff" stroke="#6e6e6e" stroke-width="1"/><path d="M10.5 0.5 V5.5 H15.5" fill="#f4f4f4" stroke="#8a8a8a" stroke-width="0.8"/><rect x="4" y="7.5" width="8" height="7.5" fill="#2f6fe0"/><path d="M4 15 L7 10.5 L9 12.5 L10.5 11 L12 15Z" fill="#4cc6f6"/><circle cx="9.8" cy="9.3" r="0.9" fill="#fff"/></svg>
<div class="t " style="left:112px;top:146px;font-size:14.5px;font-weight:normal;color:#000000;">Screenshot 2025-08-03 103956.png</div>
<div class="t " style="left:387px;top:146px;font-size:14.5px;font-weight:normal;color:#000000;">Program Screenshot - 242.png</div>
<div class="t " style="left:630px;top:146px;font-size:14.5px;font-weight:normal;color:#000000;">C:\Users\kj\Pictures\Screenshots\</div>
<div class="t " style="left:880px;top:146px;font-size:14.5px;font-weight:normal;color:#000000;">1695</div>
<div class="t " style="left:965px;top:146px;font-size:14.5px;font-weight:normal;color:#000000;">1262</div>
<div class="t " style="left:1060px;top:146px;font-size:14.5px;font-weight:normal;color:#000000;">OK</div>
<svg class="a" style="left:7px;top:170px" width="16" height="16" viewBox="0 0 16 16"><rect x="0" y="0" width="16" height="16" rx="3.5" fill="#0b5fc0"/><path d="M3.8 8.2 L6.7 11 L12.2 5.2" fill="none" stroke="#fff" stroke-width="1.1"/></svg>
<div class="t " style="left:29px;top:172px;font-size:14.5px;font-weight:normal;color:#000000;">243</div>
<svg class="a" style="left:91px;top:168px" width="17" height="20" viewBox="0 0 17 20"><path d="M0.5 0.5 H10.5 L15.5 5.5 V19.5 H0.5Z" fill="#fff" stroke="#6e6e6e" stroke-width="1"/><path d="M10.5 0.5 V5.5 H15.5" fill="#f4f4f4" stroke="#8a8a8a" stroke-width="0.8"/><rect x="4" y="7.5" width="8" height="7.5" fill="#2f6fe0"/><path d="M4 15 L7 10.5 L9 12.5 L10.5 11 L12 15Z" fill="#4cc6f6"/><circle cx="9.8" cy="9.3" r="0.9" fill="#fff"/></svg>
<div class="t " style="left:112px;top:172px;font-size:14.5px;font-weight:normal;color:#000000;">Screenshot 2025-08-03 104012.png</div>
<div class="t " style="left:387px;top:172px;font-size:14.5px;font-weight:normal;color:#000000;">Program Screenshot - 243.png</div>
<div class="t " style="left:630px;top:172px;font-size:14.5px;font-weight:normal;color:#000000;">C:\Users\kj\Pictures\Screenshots\</div>
<div class="t " style="left:880px;top:172px;font-size:14.5px;font-weight:normal;color:#000000;">1695</div>
<div class="t " style="left:965px;top:172px;font-size:14.5px;font-weight:normal;color:#000000;">1262</div>
<div class="t " style="left:1060px;top:172px;font-size:14.5px;font-weight:normal;color:#000000;">OK</div>
<svg class="a" style="left:7px;top:196px" width="16" height="16" viewBox="0 0 16 16"><rect x="0" y="0" width="16" height="16" rx="3.5" fill="#0b5fc0"/><path d="M3.8 8.2 L6.7 11 L12.2 5.2" fill="none" stroke="#fff" stroke-width="1.1"/></svg>
<div class="t " style="left:29px;top:198px;font-size:14.5px;font-weight:normal;color:#000000;">244</div>
<svg class="a" style="left:91px;top:194px" width="17" height="20" viewBox="0 0 17 20"><path d="M0.5 0.5 H10.5 L15.5 5.5 V19.5 H0.5Z" fill="#fff" stroke="#6e6e6e" stroke-width="1"/><path d="M10.5 0.5 V5.5 H15.5" fill="#f4f4f4" stroke="#8a8a8a" stroke-width="0.8"/><rect x="4" y="7.5" width="8" height="7.5" fill="#2f6fe0"/><path d="M4 15 L7 10.5 L9 12.5 L10.5 11 L12 15Z" fill="#4cc6f6"/><circle cx="9.8" cy="9.3" r="0.9" fill="#fff"/></svg>
<div class="t " style="left:112px;top:198px;font-size:14.5px;font-weight:normal;color:#000000;">Screenshot 2025-08-03 104032.png</div>
<div class="t " style="left:387px;top:198px;font-size:14.5px;font-weight:normal;color:#000000;">Program Screenshot - 244.png</div>
<div class="t " style="left:630px;top:198px;font-size:14.5px;font-weight:normal;color:#000000;">C:\Users\kj\Pictures\Screenshots\</div>
<div class="t " style="left:880px;top:198px;font-size:14.5px;font-weight:normal;color:#000000;">1695</div>
<div class="t " style="left:965px;top:198px;font-size:14.5px;font-weight:normal;color:#000000;">1262</div>
<div class="t " style="left:1060px;top:198px;font-size:14.5px;font-weight:normal;color:#000000;">OK</div>
<svg class="a" style="left:7px;top:222px" width="16" height="16" viewBox="0 0 16 16"><rect x="0" y="0" width="16" height="16" rx="3.5" fill="#0b5fc0"/><path d="M3.8 8.2 L6.7 11 L12.2 5.2" fill="none" stroke="#fff" stroke-width="1.1"/></svg>
<div class="t " style="left:29px;top:224px;font-size:14.5px;font-weight:normal;color:#000000;">245</div>
<svg class="a" style="left:91px;top:220px" width="17" height="20" viewBox="0 0 17 20"><path d="M0.5 0.5 H10.5 L15.5 5.5 V19.5 H0.5Z" fill="#fff" stroke="#6e6e6e" stroke-width="1"/><path d="M10.5 0.5 V5.5 H15.5" fill="#f4f4f4" stroke="#8a8a8a" stroke-width="0.8"/><rect x="4" y="7.5" width="8" height="7.5" fill="#2f6fe0"/><path d="M4 15 L7 10.5 L9 12.5 L10.5 11 L12 15Z" fill="#4cc6f6"/><circle cx="9.8" cy="9.3" r="0.9" fill="#fff"/></svg>
<div class="t " style="left:112px;top:224px;font-size:14.5px;font-weight:normal;color:#000000;">Screenshot 2025-08-03 104039.png</div>
<div class="t " style="left:387px;top:224px;font-size:14.5px;font-weight:normal;color:#000000;">Program Screenshot - 245.png</div>
<div class="t " style="left:630px;top:224px;font-size:14.5px;font-weight:normal;color:#000000;">C:\Users\kj\Pictures\Screenshots\</div>
<div class="t " style="left:880px;top:224px;font-size:14.5px;font-weight:normal;color:#000000;">1695</div>
<div class="t " style="left:965px;top:224px;font-size:14.5px;font-weight:normal;color:#000000;">1262</div>
<div class="t " style="left:1060px;top:224px;font-size:14.5px;font-weight:normal;color:#000000;">OK</div>
<svg class="a" style="left:7px;top:248px" width="16" height="16" viewBox="0 0 16 16"><rect x="0" y="0" width="16" height="16" rx="3.5" fill="#0b5fc0"/><path d="M3.8 8.2 L6.7 11 L12.2 5.2" fill="none" stroke="#fff" stroke-width="1.1"/></svg>
<div class="t " style="left:29px;top:250px;font-size:14.5px;font-weight:normal;color:#000000;">246</div>
<svg class="a" style="left:91px;top:246px" width="17" height="20" viewBox="0 0 17 20"><path d="M0.5 0.5 H10.5 L15.5 5.5 V19.5 H0.5Z" fill="#fff" stroke="#6e6e6e" stroke-width="1"/><path d="M10.5 0.5 V5.5 H15.5" fill="#f4f4f4" stroke="#8a8a8a" stroke-width="0.8"/><rect x="4" y="7.5" width="8" height="7.5" fill="#2f6fe0"/><path d="M4 15 L7 10.5 L9 12.5 L10.5 11 L12 15Z" fill="#4cc6f6"/><circle cx="9.8" cy="9.3" r="0.9" fill="#fff"/></svg>
<div class="t " style="left:112px;top:250px;font-size:14.5px;font-weight:normal;color:#000000;">Screenshot 2025-08-03 104044.png</div>
<div class="t " style="left:387px;top:250px;font-size:14.5px;font-weight:normal;color:#000000;">Program Screenshot - 246.png</div>
<div class="t " style="left:630px;top:250px;font-size:14.5px;font-weight:normal;color:#000000;">C:\Users\kj\Pictures\Screenshots\</div>
<div class="t " style="left:880px;top:250px;font-size:14.5px;font-weight:normal;color:#000000;">1695</div>
<div class="t " style="left:965px;top:250px;font-size:14.5px;font-weight:normal;color:#000000;">1262</div>
<div class="t " style="left:1060px;top:250px;font-size:14.5px;font-weight:normal;color:#000000;">OK</div>
<svg class="a" style="left:7px;top:274px" width="16" height="16" viewBox="0 0 16 16"><rect x="0" y="0" width="16" height="16" rx="3.5" fill="#0b5fc0"/><path d="M3.8 8.2 L6.7 11 L12.2 5.2" fill="none" stroke="#fff" stroke-width="1.1"/></svg>
<div class="t " style="left:29px;top:276px;font-size:14.5px;font-weight:normal;color:#000000;">247</div>
<svg class="a" style="left:91px;top:272px" width="17" height="20" viewBox="0 0 17 20"><path d="M0.5 0.5 H10.5 L15.5 5.5 V19.5 H0.5Z" fill="#fff" stroke="#6e6e6e" stroke-width="1"/><path d="M10.5 0.5 V5.5 H15.5" fill="#f4f4f4" stroke="#8a8a8a" stroke-width="0.8"/><rect x="4" y="7.5" width="8" height="7.5" fill="#2f6fe0"/><path d="M4 15 L7 10.5 L9 12.5 L10.5 11 L12 15Z" fill="#4cc6f6"/><circle cx="9.8" cy="9.3" r="0.9" fill="#fff"/></svg>
<div class="t " style="left:112px;top:276px;font-size:14.5px;font-weight:normal;color:#000000;">Screenshot 2025-08-03 104051.png</div>
<div class="t " style="left:387px;top:276px;font-size:14.5px;font-weight:normal;color:#000000;">Program Screenshot - 247.png</div>
<div class="t " style="left:630px;top:276px;font-size:14.5px;font-weight:normal;color:#000000;">C:\Users\kj\Pictures\Screenshots\</div>
<div class="t " style="left:880px;top:276px;font-size:14.5px;font-weight:normal;color:#000000;">1695</div>
<div class="t " style="left:965px;top:276px;font-size:14.5px;font-weight:normal;color:#000000;">1262</div>
<div class="t " style="left:1060px;top:276px;font-size:14.5px;font-weight:normal;color:#000000;">OK</div>
<svg class="a" style="left:7px;top:300px" width="16" height="16" viewBox="0 0 16 16"><rect x="0" y="0" width="16" height="16" rx="3.5" fill="#0b5fc0"/><path d="M3.8 8.2 L6.7 11 L12.2 5.2" fill="none" stroke="#fff" stroke-width="1.1"/></svg>
<div class="t " style="left:29px;top:302px;font-size:14.5px;font-weight:normal;color:#000000;">248</div>
<svg class="a" style="left:91px;top:298px" width="17" height="20" viewBox="0 0 17 20"><path d="M0.5 0.5 H10.5 L15.5 5.5 V19.5 H0.5Z" fill="#fff" stroke="#6e6e6e" stroke-width="1"/><path d="M10.5 0.5 V5.5 H15.5" fill="#f4f4f4" stroke="#8a8a8a" stroke-width="0.8"/><rect x="4" y="7.5" width="8" height="7.5" fill="#2f6fe0"/><path d="M4 15 L7 10.5 L9 12.5 L10.5 11 L12 15Z" fill="#4cc6f6"/><circle cx="9.8" cy="9.3" r="0.9" fill="#fff"/></svg>
<div class="t " style="left:112px;top:302px;font-size:14.5px;font-weight:normal;color:#000000;">Screenshot 2025-08-03 104056.png</div>
<div class="t " style="left:387px;top:302px;font-size:14.5px;font-weight:normal;color:#000000;">Program Screenshot - 248.png</div>
<div class="t " style="left:630px;top:302px;font-size:14.5px;font-weight:normal;color:#000000;">C:\Users\kj\Pictures\Screenshots\</div>
<div class="t " style="left:880px;top:302px;font-size:14.5px;font-weight:normal;color:#000000;">1695</div>
<div class="t " style="left:965px;top:302px;font-size:14.5px;font-weight:normal;color:#000000;">1262</div>
<div class="t " style="left:1060px;top:302px;font-size:14.5px;font-weight:normal;color:#000000;">OK</div>
<svg class="a" style="left:7px;top:326px" width="16" height="16" viewBox="0 0 16 16"><rect x="0" y="0" width="16" height="16" rx="3.5" fill="#0b5fc0"/><path d="M3.8 8.2 L6.7 11 L12.2 5.2" fill="none" stroke="#fff" stroke-width="1.1"/></svg>
<div class="t " style="left:29px;top:328px;font-size:14.5px;font-weight:normal;color:#000000;">249</div>
<svg class="a" style="left:91px;top:324px" width="17" height="20" viewBox="0 0 17 20"><path d="M0.5 0.5 H10.5 L15.5 5.5 V19.5 H0.5Z" fill="#fff" stroke="#6e6e6e" stroke-width="1"/><path d="M10.5 0.5 V5.5 H15.5" fill="#f4f4f4" stroke="#8a8a8a" stroke-width="0.8"/><rect x="4" y="7.5" width="8" height="7.5" fill="#2f6fe0"/><path d="M4 15 L7 10.5 L9 12.5 L10.5 11 L12 15Z" fill="#4cc6f6"/><circle cx="9.8" cy="9.3" r="0.9" fill="#fff"/></svg>
<div class="t " style="left:112px;top:328px;font-size:14.5px;font-weight:normal;color:#000000;">Screenshot 2025-08-03 104101.png</div>
<div class="t " style="left:387px;top:328px;font-size:14.5px;font-weight:normal;color:#000000;">Program Screenshot - 249.png</div>
<div class="t " style="left:630px;top:328px;font-size:14.5px;font-weight:normal;color:#000000;">C:\Users\kj\Pictures\Screenshots\</div>
<div class="t " style="left:880px;top:328px;font-size:14.5px;font-weight:normal;color:#000000;">1695</div>
<div class="t " style="left:965px;top:328px;font-size:14.5px;font-weight:normal;color:#000000;">1262</div>
<div class="t " style="left:1060px;top:328px;font-size:14.5px;font-weight:normal;color:#000000;">OK</div>
<svg class="a" style="left:7px;top:352px" width="16" height="16" viewBox="0 0 16 16"><rect x="0" y="0" width="16" height="16" rx="3.5" fill="#0b5fc0"/><path d="M3.8 8.2 L6.7 11 L12.2 5.2" fill="none" stroke="#fff" stroke-width="1.1"/></svg>
<div class="t " style="left:29px;top:354px;font-size:14.5px;font-weight:normal;color:#000000;">250</div>
<svg class="a" style="left:91px;top:350px" width="17" height="20" viewBox="0 0 17 20"><path d="M0.5 0.5 H10.5 L15.5 5.5 V19.5 H0.5Z" fill="#fff" stroke="#6e6e6e" stroke-width="1"/><path d="M10.5 0.5 V5.5 H15.5" fill="#f4f4f4" stroke="#8a8a8a" stroke-width="0.8"/><rect x="4" y="7.5" width="8" height="7.5" fill="#2f6fe0"/><path d="M4 15 L7 10.5 L9 12.5 L10.5 11 L12 15Z" fill="#4cc6f6"/><circle cx="9.8" cy="9.3" r="0.9" fill="#fff"/></svg>
<div class="t " style="left:112px;top:354px;font-size:14.5px;font-weight:normal;color:#000000;">Screenshot 2025-08-03 104309.png</div>
<div class="t " style="left:387px;top:354px;font-size:14.5px;font-weight:normal;color:#000000;">Program Screenshot - 250.png</div>
<div class="t " style="left:630px;top:354px;font-size:14.5px;font-weight:normal;color:#000000;">C:\Users\kj\Pictures\Screenshots\</div>
<div class="t " style="left:880px;top:354px;font-size:14.5px;font-weight:normal;color:#000000;">1695</div>
<div class="t " style="left:965px;top:354px;font-size:14.5px;font-weight:normal;color:#000000;">1262</div>
<div class="t " style="left:1060px;top:354px;font-size:14.5px;font-weight:normal;color:#000000;">OK</div>
<svg class="a" style="left:7px;top:378px" width="16" height="16" viewBox="0 0 16 16"><rect x="0" y="0" width="16" height="16" rx="3.5" fill="#0b5fc0"/><path d="M3.8 8.2 L6.7 11 L12.2 5.2" fill="none" stroke="#fff" stroke-width="1.1"/></svg>
<div class="t " style="left:29px;top:380px;font-size:14.5px;font-weight:normal;color:#000000;">251</div>
<svg class="a" style="left:91px;top:376px" width="17" height="20" viewBox="0 0 17 20"><path d="M0.5 0.5 H10.5 L15.5 5.5 V19.5 H0.5Z" fill="#fff" stroke="#6e6e6e" stroke-width="1"/><path d="M10.5 0.5 V5.5 H15.5" fill="#f4f4f4" stroke="#8a8a8a" stroke-width="0.8"/><rect x="4" y="7.5" width="8" height="7.5" fill="#2f6fe0"/><path d="M4 15 L7 10.5 L9 12.5 L10.5 11 L12 15Z" fill="#4cc6f6"/><circle cx="9.8" cy="9.3" r="0.9" fill="#fff"/></svg>
<div class="t " style="left:112px;top:380px;font-size:14.5px;font-weight:normal;color:#000000;">Screenshot 2025-08-03 104353.png</div>
<div class="t " style="left:387px;top:380px;font-size:14.5px;font-weight:normal;color:#000000;">Program Screenshot - 251.png</div>
<div class="t " style="left:630px;top:380px;font-size:14.5px;font-weight:normal;color:#000000;">C:\Users\kj\Pictures\Screenshots\</div>
<div class="t " style="left:880px;top:380px;font-size:14.5px;font-weight:normal;color:#000000;">1695</div>
<div class="t " style="left:965px;top:380px;font-size:14.5px;font-weight:normal;color:#000000;">1262</div>
<div class="t " style="left:1060px;top:380px;font-size:14.5px;font-weight:normal;color:#000000;">OK</div>
<svg class="a" style="left:7px;top:404px" width="16" height="16" viewBox="0 0 16 16"><rect x="0" y="0" width="16" height="16" rx="3.5" fill="#0b5fc0"/><path d="M3.8 8.2 L6.7 11 L12.2 5.2" fill="none" stroke="#fff" stroke-width="1.1"/></svg>
<div class="t " style="left:29px;top:406px;font-size:14.5px;font-weight:normal;color:#000000;">252</div>
<svg class="a" style="left:91px;top:402px" width="17" height="20" viewBox="0 0 17 20"><path d="M0.5 0.5 H10.5 L15.5 5.5 V19.5 H0.5Z" fill="#fff" stroke="#6e6e6e" stroke-width="1"/><path d="M10.5 0.5 V5.5 H15.5" fill="#f4f4f4" stroke="#8a8a8a" stroke-width="0.8"/><rect x="4" y="7.5" width="8" height="7.5" fill="#2f6fe0"/><path d="M4 15 L7 10.5 L9 12.5 L10.5 11 L12 15Z" fill="#4cc6f6"/><circle cx="9.8" cy="9.3" r="0.9" fill="#fff"/></svg>
<div class="t " style="left:112px;top:406px;font-size:14.5px;font-weight:normal;color:#000000;">Screenshot 2025-08-03 104821.png</div>
<div class="t " style="left:387px;top:406px;font-size:14.5px;font-weight:normal;color:#000000;">Program Screenshot - 252.png</div>
<div class="t " style="left:630px;top:406px;font-size:14.5px;font-weight:normal;color:#000000;">C:\Users\kj\Pictures\Screenshots\</div>
<div class="t " style="left:880px;top:406px;font-size:14.5px;font-weight:normal;color:#000000;">1695</div>
<div class="t " style="left:965px;top:406px;font-size:14.5px;font-weight:normal;color:#000000;">1262</div>
<div class="t " style="left:1060px;top:406px;font-size:14.5px;font-weight:normal;color:#000000;">OK</div>
<svg class="a" style="left:7px;top:430px" width="16" height="16" viewBox="0 0 16 16"><rect x="0" y="0" width="16" height="16" rx="3.5" fill="#0b5fc0"/><path d="M3.8 8.2 L6.7 11 L12.2 5.2" fill="none" stroke="#fff" stroke-width="1.1"/></svg>
<div class="t " style="left:29px;top:432px;font-size:14.5px;font-weight:normal;color:#000000;">253</div>
<svg class="a" style="left:91px;top:428px" width="17" height="20" viewBox="0 0 17 20"><path d="M0.5 0.5 H10.5 L15.5 5.5 V19.5 H0.5Z" fill="#fff" stroke="#6e6e6e" stroke-width="1"/><path d="M10.5 0.5 V5.5 H15.5" fill="#f4f4f4" stroke="#8a8a8a" stroke-width="0.8"/><rect x="4" y="7.5" width="8" height="7.5" fill="#2f6fe0"/><path d="M4 15 L7 10.5 L9 12.5 L10.5 11 L12 15Z" fill="#4cc6f6"/><circle cx="9.8" cy="9.3" r="0.9" fill="#fff"/></svg>
<div class="t " style="left:112px;top:432px;font-size:14.5px;font-weight:normal;color:#000000;">Screenshot 2025-08-03 105501.png</div>
<div class="t " style="left:387px;top:432px;font-size:14.5px;font-weight:normal;color:#000000;">Program Screenshot - 253.png</div>
<div class="t " style="left:630px;top:432px;font-size:14.5px;font-weight:normal;color:#000000;">C:\Users\kj\Pictures\Screenshots\</div>
<div class="t " style="left:880px;top:432px;font-size:14.5px;font-weight:normal;color:#000000;">1694</div>
<div class="t " style="left:965px;top:432px;font-size:14.5px;font-weight:normal;color:#000000;">1261</div>
<div class="t " style="left:1060px;top:432px;font-size:14.5px;font-weight:normal;color:#000000;">OK</div>
<svg class="a" style="left:7px;top:456px" width="16" height="16" viewBox="0 0 16 16"><rect x="0" y="0" width="16" height="16" rx="3.5" fill="#0b5fc0"/><path d="M3.8 8.2 L6.7 11 L12.2 5.2" fill="none" stroke="#fff" stroke-width="1.1"/></svg>
<div class="t " style="left:29px;top:458px;font-size:14.5px;font-weight:normal;color:#000000;">254</div>
<svg class="a" style="left:91px;top:454px" width="17" height="20" viewBox="0 0 17 20"><path d="M0.5 0.5 H10.5 L15.5 5.5 V19.5 H0.5Z" fill="#fff" stroke="#6e6e6e" stroke-width="1"/><path d="M10.5 0.5 V5.5 H15.5" fill="#f4f4f4" stroke="#8a8a8a" stroke-width="0.8"/><rect x="4" y="7.5" width="8" height="7.5" fill="#2f6fe0"/><path d="M4 15 L7 10.5 L9 12.5 L10.5 11 L12 15Z" fill="#4cc6f6"/><circle cx="9.8" cy="9.3" r="0.9" fill="#fff"/></svg>
<div class="t " style="left:112px;top:458px;font-size:14.5px;font-weight:normal;color:#000000;">Screenshot 2025-08-03 105529.png</div>
<div class="t " style="left:387px;top:458px;font-size:14.5px;font-weight:normal;color:#000000;">Program Screenshot - 254.png</div>
<div class="t " style="left:630px;top:458px;font-size:14.5px;font-weight:normal;color:#000000;">C:\Users\kj\Pictures\Screenshots\</div>
<div class="t " style="left:880px;top:458px;font-size:14.5px;font-weight:normal;color:#000000;">1694</div>
<div class="t " style="left:965px;top:458px;font-size:14.5px;font-weight:normal;color:#000000;">1261</div>
<div class="t " style="left:1060px;top:458px;font-size:14.5px;font-weight:normal;color:#000000;">OK</div>
<svg class="a" style="left:7px;top:482px" width="16" height="16" viewBox="0 0 16 16"><rect x="0" y="0" width="16" height="16" rx="3.5" fill="#0b5fc0"/><path d="M3.8 8.2 L6.7 11 L12.2 5.2" fill="none" stroke="#fff" stroke-width="1.1"/></svg>
<div class="t " style="left:29px;top:484px;font-size:14.5px;font-weight:normal;color:#000000;">255</div>
<svg class="a" style="left:91px;top:480px" width="17" height="20" viewBox="0 0 17 20"><path d="M0.5 0.5 H10.5 L15.5 5.5 V19.5 H0.5Z" fill="#fff" stroke="#6e6e6e" stroke-width="1"/><path d="M10.5 0.5 V5.5 H15.5" fill="#f4f4f4" stroke="#8a8a8a" stroke-width="0.8"/><rect x="4" y="7.5" width="8" height="7.5" fill="#2f6fe0"/><path d="M4 15 L7 10.5 L9 12.5 L10.5 11 L12 15Z" fill="#4cc6f6"/><circle cx="9.8" cy="9.3" r="0.9" fill="#fff"/></svg>
<div class="t " style="left:112px;top:484px;font-size:14.5px;font-weight:normal;color:#000000;">Screenshot 2025-08-03 105700.png</div>
<div class="t " style="left:387px;top:484px;font-size:14.5px;font-weight:normal;color:#000000;">Program Screenshot - 255.png</div>
<div class="t " style="left:630px;top:484px;font-size:14.5px;font-weight:normal;color:#000000;">C:\Users\kj\Pictures\Screenshots\</div>
<div class="t " style="left:880px;top:484px;font-size:14.5px;font-weight:normal;color:#000000;">1694</div>
<div class="t " style="left:965px;top:484px;font-size:14.5px;font-weight:normal;color:#000000;">1261</div>
<div class="t " style="left:1060px;top:484px;font-size:14.5px;font-weight:normal;color:#000000;">OK</div>
<svg class="a" style="left:7px;top:508px" width="16" height="16" viewBox="0 0 16 16"><rect x="0" y="0" width="16" height="16" rx="3.5" fill="#0b5fc0"/><path d="M3.8 8.2 L6.7 11 L12.2 5.2" fill="none" stroke="#fff" stroke-width="1.1"/></svg>
<div class="t " style="left:29px;top:510px;font-size:14.5px;font-weight:normal;color:#000000;">256</div>
<svg class="a" style="left:91px;top:506px" width="17" height="20" viewBox="0 0 17 20"><path d="M0.5 0.5 H10.5 L15.5 5.5 V19.5 H0.5Z" fill="#fff" stroke="#6e6e6e" stroke-width="1"/><path d="M10.5 0.5 V5.5 H15.5" fill="#f4f4f4" stroke="#8a8a8a" stroke-width="0.8"/><rect x="4" y="7.5" width="8" height="7.5" fill="#2f6fe0"/><path d="M4 15 L7 10.5 L9 12.5 L10.5 11 L12 15Z" fill="#4cc6f6"/><circle cx="9.8" cy="9.3" r="0.9" fill="#fff"/></svg>
<div class="t " style="left:112px;top:510px;font-size:14.5px;font-weight:normal;color:#000000;">Screenshot 2025-08-12 084334.png</div>
<div class="t " style="left:387px;top:510px;font-size:14.5px;font-weight:normal;color:#000000;">Program Screenshot - 256.png</div>
<div class="t " style="left:630px;top:510px;font-size:14.5px;font-weight:normal;color:#000000;">C:\Users\kj\Pictures\Screenshots\</div>
<div class="t " style="left:880px;top:510px;font-size:14.5px;font-weight:normal;color:#000000;">1881</div>
<div class="t " style="left:965px;top:510px;font-size:14.5px;font-weight:normal;color:#000000;">1004</div>
<div class="t " style="left:1060px;top:510px;font-size:14.5px;font-weight:normal;color:#000000;">OK</div>
<svg class="a" style="left:7px;top:534px" width="16" height="16" viewBox="0 0 16 16"><rect x="0" y="0" width="16" height="16" rx="3.5" fill="#0b5fc0"/><path d="M3.8 8.2 L6.7 11 L12.2 5.2" fill="none" stroke="#fff" stroke-width="1.1"/></svg>
<div class="t " style="left:29px;top:536px;font-size:14.5px;font-weight:normal;color:#000000;">257</div>
<svg class="a" style="left:91px;top:532px" width="17" height="20" viewBox="0 0 17 20"><path d="M0.5 0.5 H10.5 L15.5 5.5 V19.5 H0.5Z" fill="#fff" stroke="#6e6e6e" stroke-width="1"/><path d="M10.5 0.5 V5.5 H15.5" fill="#f4f4f4" stroke="#8a8a8a" stroke-width="0.8"/><rect x="4" y="7.5" width="8" height="7.5" fill="#2f6fe0"/><path d="M4 15 L7 10.5 L9 12.5 L10.5 11 L12 15Z" fill="#4cc6f6"/><circle cx="9.8" cy="9.3" r="0.9" fill="#fff"/></svg>
<div class="t " style="left:112px;top:536px;font-size:14.5px;font-weight:normal;color:#000000;">Screenshot 2025-08-12 084655.png</div>
<div class="t " style="left:387px;top:536px;font-size:14.5px;font-weight:normal;color:#000000;">Program Screenshot - 257.png</div>
<div class="t " style="left:630px;top:536px;font-size:14.5px;font-weight:normal;color:#000000;">C:\Users\kj\Pictures\Screenshots\</div>
<div class="t " style="left:880px;top:536px;font-size:14.5px;font-weight:normal;color:#000000;">1881</div>
<div class="t " style="left:965px;top:536px;font-size:14.5px;font-weight:normal;color:#000000;">1004</div>
<div class="t " style="left:1060px;top:536px;font-size:14.5px;font-weight:normal;color:#000000;">OK</div>
<svg class="a" style="left:7px;top:560px" width="16" height="16" viewBox="0 0 16 16"><rect x="0" y="0" width="16" height="16" rx="3.5" fill="#0b5fc0"/><path d="M3.8 8.2 L6.7 11 L12.2 5.2" fill="none" stroke="#fff" stroke-width="1.1"/></svg>
<div class="t " style="left:29px;top:562px;font-size:14.5px;font-weight:normal;color:#000000;">258</div>
<svg class="a" style="left:91px;top:558px" width="17" height="20" viewBox="0 0 17 20"><path d="M0.5 0.5 H10.5 L15.5 5.5 V19.5 H0.5Z" fill="#fff" stroke="#6e6e6e" stroke-width="1"/><path d="M10.5 0.5 V5.5 H15.5" fill="#f4f4f4" stroke="#8a8a8a" stroke-width="0.8"/><rect x="4" y="7.5" width="8" height="7.5" fill="#2f6fe0"/><path d="M4 15 L7 10.5 L9 12.5 L10.5 11 L12 15Z" fill="#4cc6f6"/><circle cx="9.8" cy="9.3" r="0.9" fill="#fff"/></svg>
<div class="t " style="left:112px;top:562px;font-size:14.5px;font-weight:normal;color:#000000;">Screenshot 2025-08-28 103041.png</div>
<div class="t " style="left:387px;top:562px;font-size:14.5px;font-weight:normal;color:#000000;">Program Screenshot - 258.png</div>
<div class="t " style="left:630px;top:562px;font-size:14.5px;font-weight:normal;color:#000000;">C:\Users\kj\Pictures\Screenshots\</div>
<div class="t " style="left:880px;top:562px;font-size:14.5px;font-weight:normal;color:#000000;">2810</div>
<div class="t " style="left:965px;top:562px;font-size:14.5px;font-weight:normal;color:#000000;">1604</div>
<div class="t " style="left:1060px;top:562px;font-size:14.5px;font-weight:normal;color:#000000;">OK</div>
<svg class="a" style="left:7px;top:586px" width="16" height="16" viewBox="0 0 16 16"><rect x="0" y="0" width="16" height="16" rx="3.5" fill="#0b5fc0"/><path d="M3.8 8.2 L6.7 11 L12.2 5.2" fill="none" stroke="#fff" stroke-width="1.1"/></svg>
<div class="t " style="left:29px;top:588px;font-size:14.5px;font-weight:normal;color:#000000;">259</div>
<svg class="a" style="left:91px;top:584px" width="17" height="20" viewBox="0 0 17 20"><path d="M0.5 0.5 H10.5 L15.5 5.5 V19.5 H0.5Z" fill="#fff" stroke="#6e6e6e" stroke-width="1"/><path d="M10.5 0.5 V5.5 H15.5" fill="#f4f4f4" stroke="#8a8a8a" stroke-width="0.8"/><rect x="4" y="7.5" width="8" height="7.5" fill="#2f6fe0"/><path d="M4 15 L7 10.5 L9 12.5 L10.5 11 L12 15Z" fill="#4cc6f6"/><circle cx="9.8" cy="9.3" r="0.9" fill="#fff"/></svg>
<div class="t " style="left:112px;top:588px;font-size:14.5px;font-weight:normal;color:#000000;">Screenshot 2025-08-28 103254.png</div>
<div class="t " style="left:387px;top:588px;font-size:14.5px;font-weight:normal;color:#000000;">Program Screenshot - 259.png</div>
<div class="t " style="left:630px;top:588px;font-size:14.5px;font-weight:normal;color:#000000;">C:\Users\kj\Pictures\Screenshots\</div>
<div class="t " style="left:880px;top:588px;font-size:14.5px;font-weight:normal;color:#000000;">2810</div>
<div class="t " style="left:965px;top:588px;font-size:14.5px;font-weight:normal;color:#000000;">1604</div>
<div class="t " style="left:1060px;top:588px;font-size:14.5px;font-weight:normal;color:#000000;">OK</div>
<svg class="a" style="left:7px;top:612px" width="16" height="16" viewBox="0 0 16 16"><rect x="0" y="0" width="16" height="16" rx="3.5" fill="#0b5fc0"/><path d="M3.8 8.2 L6.7 11 L12.2 5.2" fill="none" stroke="#fff" stroke-width="1.1"/></svg>
<div class="t " style="left:29px;top:614px;font-size:14.5px;font-weight:normal;color:#000000;">260</div>
<svg class="a" style="left:91px;top:610px" width="17" height="20" viewBox="0 0 17 20"><path d="M0.5 0.5 H10.5 L15.5 5.5 V19.5 H0.5Z" fill="#fff" stroke="#6e6e6e" stroke-width="1"/><path d="M10.5 0.5 V5.5 H15.5" fill="#f4f4f4" stroke="#8a8a8a" stroke-width="0.8"/><rect x="4" y="7.5" width="8" height="7.5" fill="#2f6fe0"/><path d="M4 15 L7 10.5 L9 12.5 L10.5 11 L12 15Z" fill="#4cc6f6"/><circle cx="9.8" cy="9.3" r="0.9" fill="#fff"/></svg>
<div class="t " style="left:112px;top:614px;font-size:14.5px;font-weight:normal;color:#000000;">Screenshot 2025-08-28 103355.png</div>
<div class="t " style="left:387px;top:614px;font-size:14.5px;font-weight:normal;color:#000000;">Program Screenshot - 260.png</div>
<div class="t " style="left:630px;top:614px;font-size:14.5px;font-weight:normal;color:#000000;">C:\Users\kj\Pictures\Screenshots\</div>
<div class="t " style="left:880px;top:614px;font-size:14.5px;font-weight:normal;color:#000000;">2810</div>
<div class="t " style="left:965px;top:614px;font-size:14.5px;font-weight:normal;color:#000000;">1604</div>
<div class="t " style="left:1060px;top:614px;font-size:14.5px;font-weight:normal;color:#000000;">OK</div>
<svg class="a" style="left:7px;top:638px" width="16" height="16" viewBox="0 0 16 16"><rect x="0" y="0" width="16" height="16" rx="3.5" fill="#0b5fc0"/><path d="M3.8 8.2 L6.7 11 L12.2 5.2" fill="none" stroke="#fff" stroke-width="1.1"/></svg>
<div class="t " style="left:29px;top:640px;font-size:14.5px;font-weight:normal;color:#000000;">261</div>
<svg class="a" style="left:91px;top:636px" width="17" height="20" viewBox="0 0 17 20"><path d="M0.5 0.5 H10.5 L15.5 5.5 V19.5 H0.5Z" fill="#fff" stroke="#6e6e6e" stroke-width="1"/><path d="M10.5 0.5 V5.5 H15.5" fill="#f4f4f4" stroke="#8a8a8a" stroke-width="0.8"/><rect x="4" y="7.5" width="8" height="7.5" fill="#2f6fe0"/><path d="M4 15 L7 10.5 L9 12.5 L10.5 11 L12 15Z" fill="#4cc6f6"/><circle cx="9.8" cy="9.3" r="0.9" fill="#fff"/></svg>
<div class="t " style="left:112px;top:640px;font-size:14.5px;font-weight:normal;color:#000000;">Screenshot 2025-08-28 103439.png</div>
<div class="t " style="left:387px;top:640px;font-size:14.5px;font-weight:normal;color:#000000;">Program Screenshot - 261.png</div>
<div class="t " style="left:630px;top:640px;font-size:14.5px;font-weight:normal;color:#000000;">C:\Users\kj\Pictures\Screenshots\</div>
<div class="t " style="left:880px;top:640px;font-size:14.5px;font-weight:normal;color:#000000;">2810</div>
<div class="t " style="left:965px;top:640px;font-size:14.5px;font-weight:normal;color:#000000;">1604</div>
<div class="t " style="left:1060px;top:640px;font-size:14.5px;font-weight:normal;color:#000000;">OK</div>
<svg class="a" style="left:7px;top:664px" width="16" height="16" viewBox="0 0 16 16"><rect x="0" y="0" width="16" height="16" rx="3.5" fill="#0b5fc0"/><path d="M3.8 8.2 L6.7 11 L12.2 5.2" fill="none" stroke="#fff" stroke-width="1.1"/></svg>
<div class="t " style="left:29px;top:666px;font-size:14.5px;font-weight:normal;color:#000000;">262</div>
<svg class="a" style="left:91px;top:662px" width="17" height="20" viewBox="0 0 17 20"><path d="M0.5 0.5 H10.5 L15.5 5.5 V19.5 H0.5Z" fill="#fff" stroke="#6e6e6e" stroke-width="1"/><path d="M10.5 0.5 V5.5 H15.5" fill="#f4f4f4" stroke="#8a8a8a" stroke-width="0.8"/><rect x="4" y="7.5" width="8" height="7.5" fill="#2f6fe0"/><path d="M4 15 L7 10.5 L9 12.5 L10.5 11 L12 15Z" fill="#4cc6f6"/><circle cx="9.8" cy="9.3" r="0.9" fill="#fff"/></svg>
<div class="t " style="left:112px;top:666px;font-size:14.5px;font-weight:normal;color:#000000;">Screenshot 2025-08-28 103520.png</div>
<div class="t " style="left:387px;top:666px;font-size:14.5px;font-weight:normal;color:#000000;">Program Screenshot - 262.png</div>
<div class="t " style="left:630px;top:666px;font-size:14.5px;font-weight:normal;color:#000000;">C:\Users\kj\Pictures\Screenshots\</div>
<div class="t " style="left:880px;top:666px;font-size:14.5px;font-weight:normal;color:#000000;">1104</div>
<div class="t " style="left:965px;top:666px;font-size:14.5px;font-weight:normal;color:#000000;">968</div>
<div class="t " style="left:1060px;top:666px;font-size:14.5px;font-weight:normal;color:#000000;">OK</div>
<div class="a" style="left:1px;top:685px;width:1138px;height:26px;background:#0078d4"></div>
<svg class="a" style="left:7px;top:690px" width="16" height="16" viewBox="0 0 16 16"><rect x="0" y="0" width="16" height="16" rx="3.5" fill="#0a5cb8"/><path d="M3.8 8.2 L6.7 11 L12.2 5.2" fill="none" stroke="#fff" stroke-width="1.1"/></svg>
<div class="t " style="left:29px;top:692px;font-size:14.5px;font-weight:normal;color:#ffffff;">263</div>
<svg class="a" style="left:91px;top:688px" width="17" height="20" viewBox="0 0 17 20"><path d="M0.5 0.5 H10.5 L15.5 5.5 V19.5 H0.5Z" fill="#fff" stroke="#6e6e6e" stroke-width="1"/><path d="M10.5 0.5 V5.5 H15.5" fill="#f4f4f4" stroke="#8a8a8a" stroke-width="0.8"/><rect x="4" y="7.5" width="8" height="7.5" fill="#2f6fe0"/><path d="M4 15 L7 10.5 L9 12.5 L10.5 11 L12 15Z" fill="#4cc6f6"/><circle cx="9.8" cy="9.3" r="0.9" fill="#fff"/></svg>
<div class="t " style="left:112px;top:692px;font-size:14.5px;font-weight:normal;color:#ffffff;">Screenshot 2025-08-28 105920.png</div>
<div class="t " style="left:387px;top:692px;font-size:14.5px;font-weight:normal;color:#ffffff;">Program Screenshot - 263.png</div>
<div class="t " style="left:630px;top:692px;font-size:14.5px;font-weight:normal;color:#ffffff;">C:\Users\kj\Pictures\Screenshots\</div>
<div class="t " style="left:880px;top:692px;font-size:14.5px;font-weight:normal;color:#ffffff;">2254</div>
<div class="t " style="left:965px;top:692px;font-size:14.5px;font-weight:normal;color:#ffffff;">1060</div>
<div class="t " style="left:1060px;top:692px;font-size:14.5px;font-weight:normal;color:#ffffff;">OK</div>
<svg class="a" style="left:7px;top:716px" width="16" height="16" viewBox="0 0 16 16"><rect x="0" y="0" width="16" height="16" rx="3.5" fill="#0b5fc0"/><path d="M3.8 8.2 L6.7 11 L12.2 5.2" fill="none" stroke="#fff" stroke-width="1.1"/></svg>
<div class="t " style="left:29px;top:718px;font-size:14.5px;font-weight:normal;color:#000000;">264</div>
<svg class="a" style="left:91px;top:714px" width="17" height="20" viewBox="0 0 17 20"><path d="M0.5 0.5 H10.5 L15.5 5.5 V19.5 H0.5Z" fill="#fff" stroke="#6e6e6e" stroke-width="1"/><path d="M10.5 0.5 V5.5 H15.5" fill="#f4f4f4" stroke="#8a8a8a" stroke-width="0.8"/><rect x="4" y="7.5" width="8" height="7.5" fill="#2f6fe0"/><path d="M4 15 L7 10.5 L9 12.5 L10.5 11 L12 15Z" fill="#4cc6f6"/><circle cx="9.8" cy="9.3" r="0.9" fill="#fff"/></svg>
<div class="t " style="left:112px;top:718px;font-size:14.5px;font-weight:normal;color:#000000;">Screenshot 2025-08-28 110030.png</div>
<div class="t " style="left:387px;top:718px;font-size:14.5px;font-weight:normal;color:#000000;">Program Screenshot - 264.png</div>
<div class="t " style="left:630px;top:718px;font-size:14.5px;font-weight:normal;color:#000000;">C:\Users\kj\Pictures\Screenshots\</div>
<div class="t " style="left:880px;top:718px;font-size:14.5px;font-weight:normal;color:#000000;">2810</div>
<div class="t " style="left:965px;top:718px;font-size:14.5px;font-weight:normal;color:#000000;">1604</div>
<div class="t " style="left:1060px;top:718px;font-size:14.5px;font-weight:normal;color:#000000;">OK</div>
</div>
<div class="a" style="left:476px;top:267px;width:1150px;height:27px;background:#ffffff"></div>
<div class="a" style="left:504px;top:268px;width:1px;height:25px;background:#e5e5e5"></div>
<div class="a" style="left:564px;top:268px;width:1px;height:25px;background:#e5e5e5"></div>
<div class="a" style="left:862px;top:268px;width:1px;height:25px;background:#e5e5e5"></div>
<div class="a" style="left:1106px;top:268px;width:1px;height:25px;background:#e5e5e5"></div>
<div class="a" style="left:1355px;top:268px;width:1px;height:25px;background:#e5e5e5"></div>
<div class="a" style="left:1440px;top:268px;width:1px;height:25px;background:#e5e5e5"></div>
<div class="a" style="left:1535px;top:268px;width:1px;height:25px;background:#e5e5e5"></div>
<div class="a" style="left:1614px;top:268px;width:1px;height:25px;background:#e5e5e5"></div>
<div class="t " style="left:508.6px;top:276px;font-size:14.5px;font-weight:normal;color:#000;letter-spacing:0.600px;">Index</div>
<div class="t " style="left:568.4px;top:276px;font-size:14.5px;font-weight:normal;color:#000;letter-spacing:0.286px;">Filename</div>
<div class="t " style="left:866px;top:276px;font-size:14.5px;font-weight:normal;color:#000;letter-spacing:0.309px;">New Filename</div>
<div class="t " style="left:1110px;top:276px;font-size:14.5px;font-weight:normal;color:#000;">Path</div>
<div class="t " style="left:1359.9px;top:276px;font-size:14.5px;font-weight:normal;color:#000;letter-spacing:1.125px;">Width</div>
<div class="t " style="left:1444.3px;top:276px;font-size:14.5px;font-weight:normal;color:#000;letter-spacing:0.860px;">Height</div>
<div class="t " style="left:1539.5px;top:276px;font-size:14.5px;font-weight:normal;color:#000;letter-spacing:0.325px;">Error</div>
</body></html>
